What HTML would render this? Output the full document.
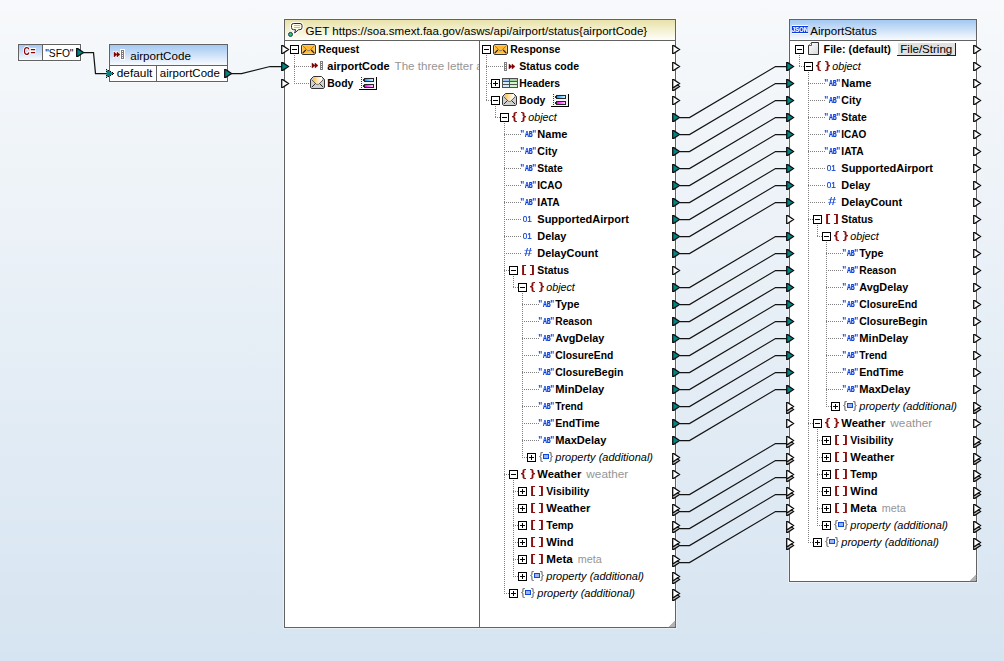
<!DOCTYPE html>
<html><head><meta charset="utf-8"><title>Mapping</title>
<style>
html,body{margin:0;padding:0;}
body{width:1004px;height:661px;overflow:hidden;background:#e6eef6;}
svg{display:block;font-family:"Liberation Sans",sans-serif;}
text{white-space:pre;}
</style></head><body>
<svg width="1004" height="661" viewBox="0 0 1004 661">
<defs>
<linearGradient id="gBg" x1="0" y1="0" x2="0" y2="1"><stop offset="0" stop-color="#f7f9fb"/><stop offset="1" stop-color="#d6e4f1"/></linearGradient>
<linearGradient id="gBlue" x1="0" y1="0" x2="0" y2="1"><stop offset="0" stop-color="#a3c8f2"/><stop offset="1" stop-color="#f8fbfe"/></linearGradient>
<linearGradient id="gYel" x1="0" y1="0" x2="0" y2="1"><stop offset="0" stop-color="#e8e2a8"/><stop offset="1" stop-color="#fffffa"/></linearGradient>
<linearGradient id="gOr" x1="0" y1="0" x2="0" y2="1"><stop offset="0" stop-color="#ffb429"/><stop offset="1" stop-color="#ffc044"/></linearGradient>
<linearGradient id="gOr2" x1="0" y1="0" x2="1" y2="0"><stop offset="0" stop-color="#ffbf45"/><stop offset=".55" stop-color="#ffe9c0"/><stop offset="1" stop-color="#ffffff"/></linearGradient>
<linearGradient id="gBarB" x1="0" y1="0" x2="1" y2="0"><stop offset="0" stop-color="#0a9cff"/><stop offset="1" stop-color="#d8f6ff"/></linearGradient>
<linearGradient id="gBarM" x1="0" y1="0" x2="1" y2="0"><stop offset="0" stop-color="#ff00ff"/><stop offset="1" stop-color="#ffc8ff"/></linearGradient>
<linearGradient id="gFile" x1="0" y1="0" x2="1" y2="1"><stop offset="0" stop-color="#ffffff"/><stop offset="1" stop-color="#d8d8dc"/></linearGradient>
<clipPath id="cReq"><rect x="285" y="41" width="194" height="586"/></clipPath>
</defs>
<rect width="1004" height="661" fill="url(#gBg)"/>

<g id="const">
<rect x="17.5" y="43.5" width="64" height="18" fill="none" stroke="#fff" stroke-opacity=".4"/>
<g shape-rendering="crispEdges"><rect x="18.5" y="44.5" width="62" height="16" fill="#fff" stroke="#626262"/><rect x="19" y="45" width="23" height="15" fill="url(#gBlue)"/><rect x="42" y="45" width="1" height="15" fill="#626262"/></g>
<text x="45.2" y="57" font-size="11.6" fill="#000" textLength="28.3" lengthAdjust="spacingAndGlyphs">&quot;SFO&quot;</text>
</g>
<g id="input">
<rect x="108.5" y="43.5" width="120" height="39" fill="none" stroke="#fff" stroke-opacity=".4"/>
<g shape-rendering="crispEdges"><rect x="109.5" y="44.5" width="118" height="37" fill="#fff" stroke="#626262"/><rect x="110" y="45" width="117" height="20" fill="url(#gBlue)"/><rect x="110" y="65" width="117" height="1" fill="#626262"/><rect x="156" y="66" width="1" height="15" fill="#626262"/></g>
<path d="M114,52 L117,54.5 L114,57 Z M117,52 L120,54.5 L117,57 Z" fill="#fff" stroke="#fff" stroke-width="2" stroke-linejoin="round"/><path d="M114,52 L117,54.5 L114,57 Z M117,52 L120,54.5 L117,57 Z" fill="#800000" stroke="#800000" stroke-width=".5" stroke-linejoin="round"/><g shape-rendering="crispEdges"><rect x="120" y="49" width="5" height="11" fill="#fff"/><rect x="121" y="50" width="3" height="9" fill="#7e7e7e"/><rect x="122" y="51" width="1" height="1" fill="#fff"/><rect x="122" y="53" width="1" height="1" fill="#fff"/><rect x="122" y="55" width="1" height="1" fill="#fff"/><rect x="122" y="57" width="1" height="1" fill="#fff"/></g>
<text x="130.2" y="60" font-size="11.6" fill="#000" textLength="60.7" lengthAdjust="spacingAndGlyphs">airportCode</text>
<text x="116.8" y="77" font-size="11.6" fill="#000" textLength="35.5" lengthAdjust="spacingAndGlyphs">default</text>
<text x="159.8" y="77" font-size="11.6" fill="#000" textLength="60" lengthAdjust="spacingAndGlyphs">airportCode</text>
</g>
<g id="rest">
<rect x="283.5" y="18.5" width="393" height="610" fill="none" stroke="#fff" stroke-opacity=".4"/>
<g shape-rendering="crispEdges"><rect x="284.5" y="19.5" width="391" height="608" fill="#fff" stroke="#626262"/><rect x="285" y="20" width="390" height="20" fill="url(#gYel)"/><rect x="285" y="40" width="390" height="1" fill="#626262"/><rect x="479" y="41" width="1" height="586" fill="#626262"/></g>
<g><path d="M293.5,23.5 H300 Q302,23.5 302,25.5 V27.5 Q302,29.7 300,29.7 H298.6 L294.6,33 L295.6,29.7 H293.5 Q291.5,29.7 291.5,27.5 V25.5 Q291.5,23.5 293.5,23.5 Z" fill="#fff" stroke="#fff" stroke-width="3" stroke-opacity=".85"/><path d="M293.5,23.5 H300 Q302,23.5 302,25.5 V27.5 Q302,29.7 300,29.7 H298.6 L294.6,33 L295.6,29.7 H293.5 Q291.5,29.7 291.5,27.5 V25.5 Q291.5,23.5 293.5,23.5 Z" fill="#fffde6" stroke="#2c2c2c" stroke-width="1"/><path d="M293.5,25.5 H300 M293.5,27.5 H300" stroke="#d6cc1c" stroke-width="1" shape-rendering="crispEdges"/><circle cx="290.5" cy="34.4" r="2.9" fill="#fff" fill-opacity=".8"/><circle cx="290.5" cy="34.4" r="2" fill="#25cf63" stroke="#17384f" stroke-width="1"/></g>
<text x="305.5" y="35" font-size="11.6" fill="#000" textLength="341.7" lengthAdjust="spacingAndGlyphs">GET https://soa.smext.faa.gov/asws/api/airport/status{airportCode}</text>
<g clip-path="url(#cReq)"><path d="M294,55h1v1h-1zM294,57h1v1h-1zM294,59h1v1h-1zM294,61h1v1h-1zM294,63h1v1h-1zM294,65h1v1h-1zM294,66h1v1h-1zM294,67h1v1h-1zM294,69h1v1h-1zM294,71h1v1h-1zM294,73h1v1h-1zM294,75h1v1h-1zM294,77h1v1h-1zM294,79h1v1h-1zM294,81h1v1h-1zM294,83h1v1h-1zM296,66h1v1h-1zM296,83h1v1h-1zM298,66h1v1h-1zM298,83h1v1h-1zM300,66h1v1h-1zM300,83h1v1h-1zM302,66h1v1h-1zM302,83h1v1h-1zM304,66h1v1h-1zM304,83h1v1h-1zM306,66h1v1h-1zM306,83h1v1h-1zM308,66h1v1h-1zM308,83h1v1h-1zM310,66h1v1h-1zM310,83h1v1h-1z" fill="#808080" shape-rendering="crispEdges"/>
<g shape-rendering="crispEdges"><rect x="290.5" y="45.5" width="8" height="8" fill="#fff" stroke="#000"/><rect x="292" y="49" width="5" height="1" fill="#000"/></g>
<g><path d="M302.5,44.5 H314.5 L315.5,45.5 V53.5 L314.5,54.5 H302.5 L301.5,53.5 V45.5 Z" fill="url(#gOr)" stroke="#2e343c"/><path d="M302.5,45.5 H314.5 V53.5 H302.5 Z" fill="none" stroke="#ffd27a" stroke-width="1" stroke-opacity=".8"/><path d="M302.5,45.5 L306.5,49.5 M314.5,45.5 L310.5,49.5" fill="none" stroke="#5a5a50" stroke-width="1" stroke-dasharray="1.1,.5"/><path d="M302.5,53.3 L305.8,50 M314.5,53.3 L311.2,50" fill="none" stroke="#1e1e1e" stroke-width="1.1"/><rect x="307" y="50" width="3" height="1" fill="#8a8a80"/></g>
<text x="318.3" y="53" font-weight="bold" font-size="11.6" fill="#000" textLength="41" lengthAdjust="spacingAndGlyphs">Request</text>
<path d="M312,63 L315,65.5 L312,68 Z M315,63 L318,65.5 L315,68 Z" fill="#800000" stroke="#800000" stroke-width=".5" stroke-linejoin="round"/><g shape-rendering="crispEdges"><rect x="320" y="61" width="3" height="9" fill="#7e7e7e"/><rect x="321" y="62" width="1" height="1" fill="#fff"/><rect x="321" y="64" width="1" height="1" fill="#fff"/><rect x="321" y="66" width="1" height="1" fill="#fff"/><rect x="321" y="68" width="1" height="1" fill="#fff"/></g>
<text x="327.3" y="70" font-weight="bold" font-size="11.6" fill="#000" textLength="62.3" lengthAdjust="spacingAndGlyphs">airportCode</text>
<text x="394.6" y="70" font-size="11.6" fill="#959595" textLength="142.896" lengthAdjust="spacingAndGlyphs">The three letter airport code</text>
<g><path d="M313.5,76.5 H321.5 L324.5,79.5 V87.5 L323.5,88.5 H311.5 L310.5,87.5 V79.5 Z" fill="#d0d0d0" stroke="#333"/><path d="M313,77 H322 V80 L319,83.6 H316 L313,80 Z" fill="url(#gOr2)"/><path d="M311.5,79.5 L316,84 M323.5,79.5 L319,84" fill="none" stroke="#555" stroke-width=".9"/><path d="M311.7,87.3 L315.3,83.7 M323.3,87.3 L319.7,83.7" fill="none" stroke="#2a2a2a" stroke-width="1"/><rect x="316" y="84" width="3" height="1" fill="#8c8c8c"/></g>
<text x="327.3" y="87" font-weight="bold" font-size="11.6" fill="#000" textLength="26" lengthAdjust="spacingAndGlyphs">Body</text>
<g shape-rendering="crispEdges"><rect x="362" y="77" width="14" height="12" fill="#f5f5f5"/><rect x="361" y="77" width="1" height="1" fill="#333"/><rect x="361" y="79" width="1" height="1" fill="#333"/><rect x="361" y="81" width="1" height="1" fill="#333"/><rect x="361" y="83" width="1" height="1" fill="#333"/><rect x="361" y="85" width="1" height="1" fill="#333"/><rect x="361" y="87" width="1" height="1" fill="#333"/><rect x="376" y="77" width="1" height="13" fill="#000"/><rect x="359" y="89" width="18" height="1" fill="#000"/><rect x="364" y="78" width="10" height="4" fill="#262626"/><rect x="363" y="79" width="1" height="2" fill="#262626"/><rect x="365" y="79" width="8" height="2" fill="url(#gBarB)"/><rect x="364" y="84" width="10" height="4" fill="#262626"/><rect x="363" y="85" width="1" height="2" fill="#262626"/><rect x="365" y="85" width="8" height="2" fill="url(#gBarM)"/></g></g>
<path d="M486,55h1v1h-1zM486,57h1v1h-1zM486,59h1v1h-1zM486,61h1v1h-1zM486,63h1v1h-1zM486,65h1v1h-1zM486,66h1v1h-1zM486,67h1v1h-1zM486,69h1v1h-1zM486,71h1v1h-1zM486,73h1v1h-1zM486,75h1v1h-1zM486,77h1v1h-1zM486,79h1v1h-1zM486,81h1v1h-1zM486,83h1v1h-1zM486,85h1v1h-1zM486,87h1v1h-1zM486,89h1v1h-1zM486,91h1v1h-1zM486,93h1v1h-1zM486,95h1v1h-1zM486,97h1v1h-1zM486,99h1v1h-1zM486,100h1v1h-1zM488,66h1v1h-1zM488,83h1v1h-1zM488,100h1v1h-1zM490,66h1v1h-1zM490,83h1v1h-1zM490,100h1v1h-1zM492,66h1v1h-1zM494,66h1v1h-1zM495,106h1v1h-1zM495,108h1v1h-1zM495,110h1v1h-1zM495,112h1v1h-1zM495,114h1v1h-1zM495,116h1v1h-1zM495,117h1v1h-1zM496,66h1v1h-1zM497,117h1v1h-1zM498,66h1v1h-1zM499,117h1v1h-1zM500,66h1v1h-1zM502,66h1v1h-1zM504,123h1v1h-1zM504,125h1v1h-1zM504,127h1v1h-1zM504,129h1v1h-1zM504,131h1v1h-1zM504,133h1v1h-1zM504,134h1v1h-1zM504,135h1v1h-1zM504,137h1v1h-1zM504,139h1v1h-1zM504,141h1v1h-1zM504,143h1v1h-1zM504,145h1v1h-1zM504,147h1v1h-1zM504,149h1v1h-1zM504,151h1v1h-1zM504,153h1v1h-1zM504,155h1v1h-1zM504,157h1v1h-1zM504,159h1v1h-1zM504,161h1v1h-1zM504,163h1v1h-1zM504,165h1v1h-1zM504,167h1v1h-1zM504,168h1v1h-1zM504,169h1v1h-1zM504,171h1v1h-1zM504,173h1v1h-1zM504,175h1v1h-1zM504,177h1v1h-1zM504,179h1v1h-1zM504,181h1v1h-1zM504,183h1v1h-1zM504,185h1v1h-1zM504,187h1v1h-1zM504,189h1v1h-1zM504,191h1v1h-1zM504,193h1v1h-1zM504,195h1v1h-1zM504,197h1v1h-1zM504,199h1v1h-1zM504,201h1v1h-1zM504,202h1v1h-1zM504,203h1v1h-1zM504,205h1v1h-1zM504,207h1v1h-1zM504,209h1v1h-1zM504,211h1v1h-1zM504,213h1v1h-1zM504,215h1v1h-1zM504,217h1v1h-1zM504,219h1v1h-1zM504,221h1v1h-1zM504,223h1v1h-1zM504,225h1v1h-1zM504,227h1v1h-1zM504,229h1v1h-1zM504,231h1v1h-1zM504,233h1v1h-1zM504,235h1v1h-1zM504,236h1v1h-1zM504,237h1v1h-1zM504,239h1v1h-1zM504,241h1v1h-1zM504,243h1v1h-1zM504,245h1v1h-1zM504,247h1v1h-1zM504,249h1v1h-1zM504,251h1v1h-1zM504,253h1v1h-1zM504,255h1v1h-1zM504,257h1v1h-1zM504,259h1v1h-1zM504,261h1v1h-1zM504,263h1v1h-1zM504,265h1v1h-1zM504,267h1v1h-1zM504,269h1v1h-1zM504,270h1v1h-1zM504,271h1v1h-1zM504,273h1v1h-1zM504,275h1v1h-1zM504,277h1v1h-1zM504,279h1v1h-1zM504,281h1v1h-1zM504,283h1v1h-1zM504,285h1v1h-1zM504,287h1v1h-1zM504,289h1v1h-1zM504,291h1v1h-1zM504,293h1v1h-1zM504,295h1v1h-1zM504,297h1v1h-1zM504,299h1v1h-1zM504,301h1v1h-1zM504,303h1v1h-1zM504,305h1v1h-1zM504,307h1v1h-1zM504,309h1v1h-1zM504,311h1v1h-1zM504,313h1v1h-1zM504,315h1v1h-1zM504,317h1v1h-1zM504,319h1v1h-1zM504,321h1v1h-1zM504,323h1v1h-1zM504,325h1v1h-1zM504,327h1v1h-1zM504,329h1v1h-1zM504,331h1v1h-1zM504,333h1v1h-1zM504,335h1v1h-1zM504,337h1v1h-1zM504,339h1v1h-1zM504,341h1v1h-1zM504,343h1v1h-1zM504,345h1v1h-1zM504,347h1v1h-1zM504,349h1v1h-1zM504,351h1v1h-1zM504,353h1v1h-1zM504,355h1v1h-1zM504,357h1v1h-1zM504,359h1v1h-1zM504,361h1v1h-1zM504,363h1v1h-1zM504,365h1v1h-1zM504,367h1v1h-1zM504,369h1v1h-1zM504,371h1v1h-1zM504,373h1v1h-1zM504,375h1v1h-1zM504,377h1v1h-1zM504,379h1v1h-1zM504,381h1v1h-1zM504,383h1v1h-1zM504,385h1v1h-1zM504,387h1v1h-1zM504,389h1v1h-1zM504,391h1v1h-1zM504,393h1v1h-1zM504,395h1v1h-1zM504,397h1v1h-1zM504,399h1v1h-1zM504,401h1v1h-1zM504,403h1v1h-1zM504,405h1v1h-1zM504,407h1v1h-1zM504,409h1v1h-1zM504,411h1v1h-1zM504,413h1v1h-1zM504,415h1v1h-1zM504,417h1v1h-1zM504,419h1v1h-1zM504,421h1v1h-1zM504,423h1v1h-1zM504,425h1v1h-1zM504,427h1v1h-1zM504,429h1v1h-1zM504,431h1v1h-1zM504,433h1v1h-1zM504,435h1v1h-1zM504,437h1v1h-1zM504,439h1v1h-1zM504,441h1v1h-1zM504,443h1v1h-1zM504,445h1v1h-1zM504,447h1v1h-1zM504,449h1v1h-1zM504,451h1v1h-1zM504,453h1v1h-1zM504,455h1v1h-1zM504,457h1v1h-1zM504,459h1v1h-1zM504,461h1v1h-1zM504,463h1v1h-1zM504,465h1v1h-1zM504,467h1v1h-1zM504,469h1v1h-1zM504,471h1v1h-1zM504,473h1v1h-1zM504,474h1v1h-1zM504,475h1v1h-1zM504,477h1v1h-1zM504,479h1v1h-1zM504,481h1v1h-1zM504,483h1v1h-1zM504,485h1v1h-1zM504,487h1v1h-1zM504,489h1v1h-1zM504,491h1v1h-1zM504,493h1v1h-1zM504,495h1v1h-1zM504,497h1v1h-1zM504,499h1v1h-1zM504,501h1v1h-1zM504,503h1v1h-1zM504,505h1v1h-1zM504,507h1v1h-1zM504,509h1v1h-1zM504,511h1v1h-1zM504,513h1v1h-1zM504,515h1v1h-1zM504,517h1v1h-1zM504,519h1v1h-1zM504,521h1v1h-1zM504,523h1v1h-1zM504,525h1v1h-1zM504,527h1v1h-1zM504,529h1v1h-1zM504,531h1v1h-1zM504,533h1v1h-1zM504,535h1v1h-1zM504,537h1v1h-1zM504,539h1v1h-1zM504,541h1v1h-1zM504,543h1v1h-1zM504,545h1v1h-1zM504,547h1v1h-1zM504,549h1v1h-1zM504,551h1v1h-1zM504,553h1v1h-1zM504,555h1v1h-1zM504,557h1v1h-1zM504,559h1v1h-1zM504,561h1v1h-1zM504,563h1v1h-1zM504,565h1v1h-1zM504,567h1v1h-1zM504,569h1v1h-1zM504,571h1v1h-1zM504,573h1v1h-1zM504,575h1v1h-1zM504,577h1v1h-1zM504,579h1v1h-1zM504,581h1v1h-1zM504,583h1v1h-1zM504,585h1v1h-1zM504,587h1v1h-1zM504,589h1v1h-1zM504,591h1v1h-1zM504,593h1v1h-1zM506,134h1v1h-1zM506,151h1v1h-1zM506,168h1v1h-1zM506,185h1v1h-1zM506,202h1v1h-1zM506,219h1v1h-1zM506,236h1v1h-1zM506,253h1v1h-1zM506,270h1v1h-1zM506,474h1v1h-1zM506,593h1v1h-1zM508,134h1v1h-1zM508,151h1v1h-1zM508,168h1v1h-1zM508,185h1v1h-1zM508,202h1v1h-1zM508,219h1v1h-1zM508,236h1v1h-1zM508,253h1v1h-1zM508,270h1v1h-1zM508,474h1v1h-1zM508,593h1v1h-1zM510,134h1v1h-1zM510,151h1v1h-1zM510,168h1v1h-1zM510,185h1v1h-1zM510,202h1v1h-1zM510,219h1v1h-1zM510,236h1v1h-1zM510,253h1v1h-1zM512,134h1v1h-1zM512,151h1v1h-1zM512,168h1v1h-1zM512,185h1v1h-1zM512,202h1v1h-1zM512,219h1v1h-1zM512,236h1v1h-1zM512,253h1v1h-1zM513,276h1v1h-1zM513,278h1v1h-1zM513,280h1v1h-1zM513,282h1v1h-1zM513,284h1v1h-1zM513,286h1v1h-1zM513,287h1v1h-1zM513,480h1v1h-1zM513,482h1v1h-1zM513,484h1v1h-1zM513,486h1v1h-1zM513,488h1v1h-1zM513,490h1v1h-1zM513,491h1v1h-1zM513,492h1v1h-1zM513,494h1v1h-1zM513,496h1v1h-1zM513,498h1v1h-1zM513,500h1v1h-1zM513,502h1v1h-1zM513,504h1v1h-1zM513,506h1v1h-1zM513,508h1v1h-1zM513,510h1v1h-1zM513,512h1v1h-1zM513,514h1v1h-1zM513,516h1v1h-1zM513,518h1v1h-1zM513,520h1v1h-1zM513,522h1v1h-1zM513,524h1v1h-1zM513,525h1v1h-1zM513,526h1v1h-1zM513,528h1v1h-1zM513,530h1v1h-1zM513,532h1v1h-1zM513,534h1v1h-1zM513,536h1v1h-1zM513,538h1v1h-1zM513,540h1v1h-1zM513,542h1v1h-1zM513,544h1v1h-1zM513,546h1v1h-1zM513,548h1v1h-1zM513,550h1v1h-1zM513,552h1v1h-1zM513,554h1v1h-1zM513,556h1v1h-1zM513,558h1v1h-1zM513,559h1v1h-1zM513,560h1v1h-1zM513,562h1v1h-1zM513,564h1v1h-1zM513,566h1v1h-1zM513,568h1v1h-1zM513,570h1v1h-1zM513,572h1v1h-1zM513,574h1v1h-1zM513,576h1v1h-1zM514,134h1v1h-1zM514,151h1v1h-1zM514,168h1v1h-1zM514,185h1v1h-1zM514,202h1v1h-1zM514,219h1v1h-1zM514,236h1v1h-1zM514,253h1v1h-1zM515,287h1v1h-1zM515,491h1v1h-1zM515,508h1v1h-1zM515,525h1v1h-1zM515,542h1v1h-1zM515,559h1v1h-1zM515,576h1v1h-1zM516,134h1v1h-1zM516,151h1v1h-1zM516,168h1v1h-1zM516,185h1v1h-1zM516,202h1v1h-1zM516,219h1v1h-1zM516,236h1v1h-1zM516,253h1v1h-1zM517,287h1v1h-1zM517,491h1v1h-1zM517,508h1v1h-1zM517,525h1v1h-1zM517,542h1v1h-1zM517,559h1v1h-1zM517,576h1v1h-1zM518,134h1v1h-1zM518,151h1v1h-1zM518,168h1v1h-1zM518,185h1v1h-1zM518,202h1v1h-1zM518,219h1v1h-1zM518,236h1v1h-1zM518,253h1v1h-1zM520,134h1v1h-1zM520,151h1v1h-1zM520,168h1v1h-1zM520,185h1v1h-1zM520,202h1v1h-1zM520,219h1v1h-1zM520,236h1v1h-1zM520,253h1v1h-1zM522,293h1v1h-1zM522,295h1v1h-1zM522,297h1v1h-1zM522,299h1v1h-1zM522,301h1v1h-1zM522,303h1v1h-1zM522,304h1v1h-1zM522,305h1v1h-1zM522,307h1v1h-1zM522,309h1v1h-1zM522,311h1v1h-1zM522,313h1v1h-1zM522,315h1v1h-1zM522,317h1v1h-1zM522,319h1v1h-1zM522,321h1v1h-1zM522,323h1v1h-1zM522,325h1v1h-1zM522,327h1v1h-1zM522,329h1v1h-1zM522,331h1v1h-1zM522,333h1v1h-1zM522,335h1v1h-1zM522,337h1v1h-1zM522,338h1v1h-1zM522,339h1v1h-1zM522,341h1v1h-1zM522,343h1v1h-1zM522,345h1v1h-1zM522,347h1v1h-1zM522,349h1v1h-1zM522,351h1v1h-1zM522,353h1v1h-1zM522,355h1v1h-1zM522,357h1v1h-1zM522,359h1v1h-1zM522,361h1v1h-1zM522,363h1v1h-1zM522,365h1v1h-1zM522,367h1v1h-1zM522,369h1v1h-1zM522,371h1v1h-1zM522,372h1v1h-1zM522,373h1v1h-1zM522,375h1v1h-1zM522,377h1v1h-1zM522,379h1v1h-1zM522,381h1v1h-1zM522,383h1v1h-1zM522,385h1v1h-1zM522,387h1v1h-1zM522,389h1v1h-1zM522,391h1v1h-1zM522,393h1v1h-1zM522,395h1v1h-1zM522,397h1v1h-1zM522,399h1v1h-1zM522,401h1v1h-1zM522,403h1v1h-1zM522,405h1v1h-1zM522,406h1v1h-1zM522,407h1v1h-1zM522,409h1v1h-1zM522,411h1v1h-1zM522,413h1v1h-1zM522,415h1v1h-1zM522,417h1v1h-1zM522,419h1v1h-1zM522,421h1v1h-1zM522,423h1v1h-1zM522,425h1v1h-1zM522,427h1v1h-1zM522,429h1v1h-1zM522,431h1v1h-1zM522,433h1v1h-1zM522,435h1v1h-1zM522,437h1v1h-1zM522,439h1v1h-1zM522,440h1v1h-1zM522,441h1v1h-1zM522,443h1v1h-1zM522,445h1v1h-1zM522,447h1v1h-1zM522,449h1v1h-1zM522,451h1v1h-1zM522,453h1v1h-1zM522,455h1v1h-1zM522,457h1v1h-1zM524,304h1v1h-1zM524,321h1v1h-1zM524,338h1v1h-1zM524,355h1v1h-1zM524,372h1v1h-1zM524,389h1v1h-1zM524,406h1v1h-1zM524,423h1v1h-1zM524,440h1v1h-1zM524,457h1v1h-1zM526,304h1v1h-1zM526,321h1v1h-1zM526,338h1v1h-1zM526,355h1v1h-1zM526,372h1v1h-1zM526,389h1v1h-1zM526,406h1v1h-1zM526,423h1v1h-1zM526,440h1v1h-1zM526,457h1v1h-1zM528,304h1v1h-1zM528,321h1v1h-1zM528,338h1v1h-1zM528,355h1v1h-1zM528,372h1v1h-1zM528,389h1v1h-1zM528,406h1v1h-1zM528,423h1v1h-1zM528,440h1v1h-1zM530,304h1v1h-1zM530,321h1v1h-1zM530,338h1v1h-1zM530,355h1v1h-1zM530,372h1v1h-1zM530,389h1v1h-1zM530,406h1v1h-1zM530,423h1v1h-1zM530,440h1v1h-1zM532,304h1v1h-1zM532,321h1v1h-1zM532,338h1v1h-1zM532,355h1v1h-1zM532,372h1v1h-1zM532,389h1v1h-1zM532,406h1v1h-1zM532,423h1v1h-1zM532,440h1v1h-1zM534,304h1v1h-1zM534,321h1v1h-1zM534,338h1v1h-1zM534,355h1v1h-1zM534,372h1v1h-1zM534,389h1v1h-1zM534,406h1v1h-1zM534,423h1v1h-1zM534,440h1v1h-1zM536,304h1v1h-1zM536,321h1v1h-1zM536,338h1v1h-1zM536,355h1v1h-1zM536,372h1v1h-1zM536,389h1v1h-1zM536,406h1v1h-1zM536,423h1v1h-1zM536,440h1v1h-1zM538,304h1v1h-1zM538,321h1v1h-1zM538,338h1v1h-1zM538,355h1v1h-1zM538,372h1v1h-1zM538,389h1v1h-1zM538,406h1v1h-1zM538,423h1v1h-1zM538,440h1v1h-1z" fill="#808080" shape-rendering="crispEdges"/>
<g shape-rendering="crispEdges"><rect x="482.5" y="45.5" width="8" height="8" fill="#fff" stroke="#000"/><rect x="484" y="49" width="5" height="1" fill="#000"/></g>
<g><path d="M494.5,44.5 H506.5 L507.5,45.5 V53.5 L506.5,54.5 H494.5 L493.5,53.5 V45.5 Z" fill="url(#gOr)" stroke="#2e343c"/><path d="M494.5,45.5 H506.5 V53.5 H494.5 Z" fill="none" stroke="#ffd27a" stroke-width="1" stroke-opacity=".8"/><path d="M494.5,45.5 L498.5,49.5 M506.5,45.5 L502.5,49.5" fill="none" stroke="#5a5a50" stroke-width="1" stroke-dasharray="1.1,.5"/><path d="M494.5,53.3 L497.8,50 M506.5,53.3 L503.2,50" fill="none" stroke="#1e1e1e" stroke-width="1.1"/><rect x="499" y="50" width="3" height="1" fill="#8a8a80"/></g>
<text x="510.3" y="53" font-weight="bold" font-size="11.6" fill="#000" textLength="50" lengthAdjust="spacingAndGlyphs">Response</text>
<g shape-rendering="crispEdges"><rect x="504" y="62" width="3" height="9" fill="#7e7e7e"/><rect x="505" y="63" width="1" height="1" fill="#fff"/><rect x="505" y="65" width="1" height="1" fill="#fff"/><rect x="505" y="67" width="1" height="1" fill="#fff"/><rect x="505" y="69" width="1" height="1" fill="#fff"/></g><path d="M509,64 L512,66.5 L509,69 Z M512,64 L515,66.5 L512,69 Z" fill="#800000" stroke="#800000" stroke-width=".5" stroke-linejoin="round"/>
<text x="519.3" y="70" font-weight="bold" font-size="11.6" fill="#000" textLength="59.7" lengthAdjust="spacingAndGlyphs">Status code</text>
<g shape-rendering="crispEdges"><rect x="491.5" y="79.5" width="8" height="8" fill="#fff" stroke="#000"/><rect x="493" y="83" width="5" height="1" fill="#000"/><rect x="495" y="81" width="1" height="5" fill="#000"/></g>
<g shape-rendering="crispEdges"><rect x="502" y="78" width="16" height="10" fill="#505050"/><rect x="503" y="79" width="6" height="2" fill="#9fc6f6"/><rect x="503" y="82" width="6" height="2" fill="#d4ecff"/><rect x="503" y="85" width="6" height="2" fill="#d4ecff"/><rect x="510" y="79" width="7" height="2" fill="#9fd6a0"/><rect x="510" y="82" width="7" height="2" fill="#d2f6c8"/><rect x="510" y="85" width="7" height="2" fill="#d2f6c8"/></g>
<text x="519.3" y="87" font-weight="bold" font-size="11.6" fill="#000" textLength="40.8" lengthAdjust="spacingAndGlyphs">Headers</text>
<g shape-rendering="crispEdges"><rect x="491.5" y="96.5" width="8" height="8" fill="#fff" stroke="#000"/><rect x="493" y="100" width="5" height="1" fill="#000"/></g>
<g><path d="M505.5,93.5 H513.5 L516.5,96.5 V104.5 L515.5,105.5 H503.5 L502.5,104.5 V96.5 Z" fill="#d0d0d0" stroke="#333"/><path d="M505,94 H514 V97 L511,100.6 H508 L505,97 Z" fill="url(#gOr2)"/><path d="M503.5,96.5 L508,101 M515.5,96.5 L511,101" fill="none" stroke="#555" stroke-width=".9"/><path d="M503.7,104.3 L507.3,100.7 M515.3,104.3 L511.7,100.7" fill="none" stroke="#2a2a2a" stroke-width="1"/><rect x="508" y="101" width="3" height="1" fill="#8c8c8c"/></g>
<text x="519.3" y="104" font-weight="bold" font-size="11.6" fill="#000" textLength="26" lengthAdjust="spacingAndGlyphs">Body</text>
<g shape-rendering="crispEdges"><rect x="554" y="94" width="14" height="12" fill="#f5f5f5"/><rect x="553" y="94" width="1" height="1" fill="#333"/><rect x="553" y="96" width="1" height="1" fill="#333"/><rect x="553" y="98" width="1" height="1" fill="#333"/><rect x="553" y="100" width="1" height="1" fill="#333"/><rect x="553" y="102" width="1" height="1" fill="#333"/><rect x="553" y="104" width="1" height="1" fill="#333"/><rect x="568" y="94" width="1" height="13" fill="#000"/><rect x="551" y="106" width="18" height="1" fill="#000"/><rect x="556" y="95" width="10" height="4" fill="#262626"/><rect x="555" y="96" width="1" height="2" fill="#262626"/><rect x="557" y="96" width="8" height="2" fill="url(#gBarB)"/><rect x="556" y="101" width="10" height="4" fill="#262626"/><rect x="555" y="102" width="1" height="2" fill="#262626"/><rect x="557" y="102" width="8" height="2" fill="url(#gBarM)"/></g>
<g shape-rendering="crispEdges"><rect x="500.5" y="113.5" width="8" height="8" fill="#fff" stroke="#000"/><rect x="502" y="117" width="5" height="1" fill="#000"/></g>

<text x="528.3" y="121" font-style="italic" font-size="11.6" fill="#000" textLength="28.5" lengthAdjust="spacingAndGlyphs">object</text>

<text x="537.3" y="138" font-weight="bold" font-size="11.6" fill="#000" textLength="30" lengthAdjust="spacingAndGlyphs">Name</text>

<text x="537.3" y="155" font-weight="bold" font-size="11.6" fill="#000" textLength="20" lengthAdjust="spacingAndGlyphs">City</text>

<text x="537.3" y="172" font-weight="bold" font-size="11.6" fill="#000" textLength="25.4" lengthAdjust="spacingAndGlyphs">State</text>

<text x="537.3" y="189" font-weight="bold" font-size="11.6" fill="#000" textLength="25" lengthAdjust="spacingAndGlyphs">ICAO</text>

<text x="537.3" y="206" font-weight="bold" font-size="11.6" fill="#000" textLength="22.4" lengthAdjust="spacingAndGlyphs">IATA</text>

<text x="537.3" y="223" font-weight="bold" font-size="11.6" fill="#000" textLength="91.7" lengthAdjust="spacingAndGlyphs">SupportedAirport</text>

<text x="537.3" y="240" font-weight="bold" font-size="11.6" fill="#000" textLength="29" lengthAdjust="spacingAndGlyphs">Delay</text>

<text x="537.3" y="257" font-weight="bold" font-size="11.6" fill="#000" textLength="60.8" lengthAdjust="spacingAndGlyphs">DelayCount</text>
<g shape-rendering="crispEdges"><rect x="509.5" y="266.5" width="8" height="8" fill="#fff" stroke="#000"/><rect x="511" y="270" width="5" height="1" fill="#000"/></g>

<text x="537.3" y="274" font-weight="bold" font-size="11.6" fill="#000" textLength="31.8" lengthAdjust="spacingAndGlyphs">Status</text>
<g shape-rendering="crispEdges"><rect x="518.5" y="283.5" width="8" height="8" fill="#fff" stroke="#000"/><rect x="520" y="287" width="5" height="1" fill="#000"/></g>

<text x="546.3" y="291" font-style="italic" font-size="11.6" fill="#000" textLength="28.5" lengthAdjust="spacingAndGlyphs">object</text>

<text x="555.3" y="308" font-weight="bold" font-size="11.6" fill="#000" textLength="24.2" lengthAdjust="spacingAndGlyphs">Type</text>

<text x="555.3" y="325" font-weight="bold" font-size="11.6" fill="#000" textLength="36.9" lengthAdjust="spacingAndGlyphs">Reason</text>

<text x="555.3" y="342" font-weight="bold" font-size="11.6" fill="#000" textLength="49" lengthAdjust="spacingAndGlyphs">AvgDelay</text>

<text x="555.3" y="359" font-weight="bold" font-size="11.6" fill="#000" textLength="58.1" lengthAdjust="spacingAndGlyphs">ClosureEnd</text>

<text x="555.3" y="376" font-weight="bold" font-size="11.6" fill="#000" textLength="68.1" lengthAdjust="spacingAndGlyphs">ClosureBegin</text>

<text x="555.3" y="393" font-weight="bold" font-size="11.6" fill="#000" textLength="49" lengthAdjust="spacingAndGlyphs">MinDelay</text>

<text x="555.3" y="410" font-weight="bold" font-size="11.6" fill="#000" textLength="27.8" lengthAdjust="spacingAndGlyphs">Trend</text>

<text x="555.3" y="427" font-weight="bold" font-size="11.6" fill="#000" textLength="44.4" lengthAdjust="spacingAndGlyphs">EndTime</text>

<text x="555.3" y="444" font-weight="bold" font-size="11.6" fill="#000" textLength="51.1" lengthAdjust="spacingAndGlyphs">MaxDelay</text>
<g shape-rendering="crispEdges"><rect x="527.5" y="453.5" width="8" height="8" fill="#fff" stroke="#000"/><rect x="529" y="457" width="5" height="1" fill="#000"/><rect x="531" y="455" width="1" height="5" fill="#000"/></g>
<rect x="543.5" y="454.5" width="5" height="4" fill="#9db6f2" stroke="#0a4ae0" shape-rendering="crispEdges"/>
<text x="555.3" y="461" font-style="italic" font-size="11.6" fill="#000" textLength="97.7" lengthAdjust="spacingAndGlyphs">property (additional)</text>
<g shape-rendering="crispEdges"><rect x="509.5" y="470.5" width="8" height="8" fill="#fff" stroke="#000"/><rect x="511" y="474" width="5" height="1" fill="#000"/></g>

<text x="537.3" y="478" font-weight="bold" font-size="11.6" fill="#000" textLength="44" lengthAdjust="spacingAndGlyphs">Weather</text>
<text x="586.3" y="478" font-size="11.6" fill="#959595" textLength="42" lengthAdjust="spacingAndGlyphs">weather</text>
<g shape-rendering="crispEdges"><rect x="518.5" y="487.5" width="8" height="8" fill="#fff" stroke="#000"/><rect x="520" y="491" width="5" height="1" fill="#000"/><rect x="522" y="489" width="1" height="5" fill="#000"/></g>

<text x="546.3" y="495" font-weight="bold" font-size="11.6" fill="#000" textLength="43" lengthAdjust="spacingAndGlyphs">Visibility</text>
<g shape-rendering="crispEdges"><rect x="518.5" y="504.5" width="8" height="8" fill="#fff" stroke="#000"/><rect x="520" y="508" width="5" height="1" fill="#000"/><rect x="522" y="506" width="1" height="5" fill="#000"/></g>

<text x="546.3" y="512" font-weight="bold" font-size="11.6" fill="#000" textLength="44" lengthAdjust="spacingAndGlyphs">Weather</text>
<g shape-rendering="crispEdges"><rect x="518.5" y="521.5" width="8" height="8" fill="#fff" stroke="#000"/><rect x="520" y="525" width="5" height="1" fill="#000"/><rect x="522" y="523" width="1" height="5" fill="#000"/></g>

<text x="546.3" y="529" font-weight="bold" font-size="11.6" fill="#000" textLength="27.2" lengthAdjust="spacingAndGlyphs">Temp</text>
<g shape-rendering="crispEdges"><rect x="518.5" y="538.5" width="8" height="8" fill="#fff" stroke="#000"/><rect x="520" y="542" width="5" height="1" fill="#000"/><rect x="522" y="540" width="1" height="5" fill="#000"/></g>

<text x="546.3" y="546" font-weight="bold" font-size="11.6" fill="#000" textLength="27.2" lengthAdjust="spacingAndGlyphs">Wind</text>
<g shape-rendering="crispEdges"><rect x="518.5" y="555.5" width="8" height="8" fill="#fff" stroke="#000"/><rect x="520" y="559" width="5" height="1" fill="#000"/><rect x="522" y="557" width="1" height="5" fill="#000"/></g>

<text x="546.3" y="563" font-weight="bold" font-size="11.6" fill="#000" textLength="26.5" lengthAdjust="spacingAndGlyphs">Meta</text>
<text x="577.8" y="563" font-size="11.6" fill="#959595" textLength="24" lengthAdjust="spacingAndGlyphs">meta</text>
<g shape-rendering="crispEdges"><rect x="518.5" y="572.5" width="8" height="8" fill="#fff" stroke="#000"/><rect x="520" y="576" width="5" height="1" fill="#000"/><rect x="522" y="574" width="1" height="5" fill="#000"/></g>
<rect x="534.5" y="573.5" width="5" height="4" fill="#9db6f2" stroke="#0a4ae0" shape-rendering="crispEdges"/>
<text x="546.3" y="580" font-style="italic" font-size="11.6" fill="#000" textLength="97.7" lengthAdjust="spacingAndGlyphs">property (additional)</text>
<g shape-rendering="crispEdges"><rect x="509.5" y="589.5" width="8" height="8" fill="#fff" stroke="#000"/><rect x="511" y="593" width="5" height="1" fill="#000"/><rect x="513" y="591" width="1" height="5" fill="#000"/></g>
<rect x="525.5" y="590.5" width="5" height="4" fill="#9db6f2" stroke="#0a4ae0" shape-rendering="crispEdges"/>
<text x="537.3" y="597" font-style="italic" font-size="11.6" fill="#000" textLength="97.7" lengthAdjust="spacingAndGlyphs">property (additional)</text>
<path d="M675,620.5 L675,627 L668.5,627 Z" fill="#d8d8d8"/><path d="M669,627.5 L675.5,621 M671,627.5 L675.5,623 M673,627.5 L675.5,625" stroke="#8e8e8e" stroke-width="1"/>
</g>
<g id="json">
<rect x="788.5" y="18.5" width="189" height="564" fill="none" stroke="#fff" stroke-opacity=".4"/>
<g shape-rendering="crispEdges"><rect x="789.5" y="19.5" width="187" height="562" fill="#fff" stroke="#626262"/><rect x="790" y="20" width="186" height="20" fill="url(#gBlue)"/><rect x="790" y="40" width="186" height="1" fill="#626262"/></g>
<g shape-rendering="crispEdges"><rect x="792" y="25" width="16" height="9" fill="#fff"/><rect x="792" y="26" width="16" height="7" fill="#0a3ae0"/></g>
<text x="810.2" y="35" font-size="11.6" fill="#000" textLength="66.7" lengthAdjust="spacingAndGlyphs">AirportStatus</text>
<path d="M799,55h1v1h-1zM799,57h1v1h-1zM799,59h1v1h-1zM799,61h1v1h-1zM799,63h1v1h-1zM799,65h1v1h-1zM799,66h1v1h-1zM801,66h1v1h-1zM803,66h1v1h-1zM808,72h1v1h-1zM808,74h1v1h-1zM808,76h1v1h-1zM808,78h1v1h-1zM808,80h1v1h-1zM808,82h1v1h-1zM808,83h1v1h-1zM808,84h1v1h-1zM808,86h1v1h-1zM808,88h1v1h-1zM808,90h1v1h-1zM808,92h1v1h-1zM808,94h1v1h-1zM808,96h1v1h-1zM808,98h1v1h-1zM808,100h1v1h-1zM808,102h1v1h-1zM808,104h1v1h-1zM808,106h1v1h-1zM808,108h1v1h-1zM808,110h1v1h-1zM808,112h1v1h-1zM808,114h1v1h-1zM808,116h1v1h-1zM808,117h1v1h-1zM808,118h1v1h-1zM808,120h1v1h-1zM808,122h1v1h-1zM808,124h1v1h-1zM808,126h1v1h-1zM808,128h1v1h-1zM808,130h1v1h-1zM808,132h1v1h-1zM808,134h1v1h-1zM808,136h1v1h-1zM808,138h1v1h-1zM808,140h1v1h-1zM808,142h1v1h-1zM808,144h1v1h-1zM808,146h1v1h-1zM808,148h1v1h-1zM808,150h1v1h-1zM808,151h1v1h-1zM808,152h1v1h-1zM808,154h1v1h-1zM808,156h1v1h-1zM808,158h1v1h-1zM808,160h1v1h-1zM808,162h1v1h-1zM808,164h1v1h-1zM808,166h1v1h-1zM808,168h1v1h-1zM808,170h1v1h-1zM808,172h1v1h-1zM808,174h1v1h-1zM808,176h1v1h-1zM808,178h1v1h-1zM808,180h1v1h-1zM808,182h1v1h-1zM808,184h1v1h-1zM808,185h1v1h-1zM808,186h1v1h-1zM808,188h1v1h-1zM808,190h1v1h-1zM808,192h1v1h-1zM808,194h1v1h-1zM808,196h1v1h-1zM808,198h1v1h-1zM808,200h1v1h-1zM808,202h1v1h-1zM808,204h1v1h-1zM808,206h1v1h-1zM808,208h1v1h-1zM808,210h1v1h-1zM808,212h1v1h-1zM808,214h1v1h-1zM808,216h1v1h-1zM808,218h1v1h-1zM808,219h1v1h-1zM808,220h1v1h-1zM808,222h1v1h-1zM808,224h1v1h-1zM808,226h1v1h-1zM808,228h1v1h-1zM808,230h1v1h-1zM808,232h1v1h-1zM808,234h1v1h-1zM808,236h1v1h-1zM808,238h1v1h-1zM808,240h1v1h-1zM808,242h1v1h-1zM808,244h1v1h-1zM808,246h1v1h-1zM808,248h1v1h-1zM808,250h1v1h-1zM808,252h1v1h-1zM808,254h1v1h-1zM808,256h1v1h-1zM808,258h1v1h-1zM808,260h1v1h-1zM808,262h1v1h-1zM808,264h1v1h-1zM808,266h1v1h-1zM808,268h1v1h-1zM808,270h1v1h-1zM808,272h1v1h-1zM808,274h1v1h-1zM808,276h1v1h-1zM808,278h1v1h-1zM808,280h1v1h-1zM808,282h1v1h-1zM808,284h1v1h-1zM808,286h1v1h-1zM808,288h1v1h-1zM808,290h1v1h-1zM808,292h1v1h-1zM808,294h1v1h-1zM808,296h1v1h-1zM808,298h1v1h-1zM808,300h1v1h-1zM808,302h1v1h-1zM808,304h1v1h-1zM808,306h1v1h-1zM808,308h1v1h-1zM808,310h1v1h-1zM808,312h1v1h-1zM808,314h1v1h-1zM808,316h1v1h-1zM808,318h1v1h-1zM808,320h1v1h-1zM808,322h1v1h-1zM808,324h1v1h-1zM808,326h1v1h-1zM808,328h1v1h-1zM808,330h1v1h-1zM808,332h1v1h-1zM808,334h1v1h-1zM808,336h1v1h-1zM808,338h1v1h-1zM808,340h1v1h-1zM808,342h1v1h-1zM808,344h1v1h-1zM808,346h1v1h-1zM808,348h1v1h-1zM808,350h1v1h-1zM808,352h1v1h-1zM808,354h1v1h-1zM808,356h1v1h-1zM808,358h1v1h-1zM808,360h1v1h-1zM808,362h1v1h-1zM808,364h1v1h-1zM808,366h1v1h-1zM808,368h1v1h-1zM808,370h1v1h-1zM808,372h1v1h-1zM808,374h1v1h-1zM808,376h1v1h-1zM808,378h1v1h-1zM808,380h1v1h-1zM808,382h1v1h-1zM808,384h1v1h-1zM808,386h1v1h-1zM808,388h1v1h-1zM808,390h1v1h-1zM808,392h1v1h-1zM808,394h1v1h-1zM808,396h1v1h-1zM808,398h1v1h-1zM808,400h1v1h-1zM808,402h1v1h-1zM808,404h1v1h-1zM808,406h1v1h-1zM808,408h1v1h-1zM808,410h1v1h-1zM808,412h1v1h-1zM808,414h1v1h-1zM808,416h1v1h-1zM808,418h1v1h-1zM808,420h1v1h-1zM808,422h1v1h-1zM808,423h1v1h-1zM808,424h1v1h-1zM808,426h1v1h-1zM808,428h1v1h-1zM808,430h1v1h-1zM808,432h1v1h-1zM808,434h1v1h-1zM808,436h1v1h-1zM808,438h1v1h-1zM808,440h1v1h-1zM808,442h1v1h-1zM808,444h1v1h-1zM808,446h1v1h-1zM808,448h1v1h-1zM808,450h1v1h-1zM808,452h1v1h-1zM808,454h1v1h-1zM808,456h1v1h-1zM808,458h1v1h-1zM808,460h1v1h-1zM808,462h1v1h-1zM808,464h1v1h-1zM808,466h1v1h-1zM808,468h1v1h-1zM808,470h1v1h-1zM808,472h1v1h-1zM808,474h1v1h-1zM808,476h1v1h-1zM808,478h1v1h-1zM808,480h1v1h-1zM808,482h1v1h-1zM808,484h1v1h-1zM808,486h1v1h-1zM808,488h1v1h-1zM808,490h1v1h-1zM808,492h1v1h-1zM808,494h1v1h-1zM808,496h1v1h-1zM808,498h1v1h-1zM808,500h1v1h-1zM808,502h1v1h-1zM808,504h1v1h-1zM808,506h1v1h-1zM808,508h1v1h-1zM808,510h1v1h-1zM808,512h1v1h-1zM808,514h1v1h-1zM808,516h1v1h-1zM808,518h1v1h-1zM808,520h1v1h-1zM808,522h1v1h-1zM808,524h1v1h-1zM808,526h1v1h-1zM808,528h1v1h-1zM808,530h1v1h-1zM808,532h1v1h-1zM808,534h1v1h-1zM808,536h1v1h-1zM808,538h1v1h-1zM808,540h1v1h-1zM808,542h1v1h-1zM810,83h1v1h-1zM810,100h1v1h-1zM810,117h1v1h-1zM810,134h1v1h-1zM810,151h1v1h-1zM810,168h1v1h-1zM810,185h1v1h-1zM810,202h1v1h-1zM810,219h1v1h-1zM810,423h1v1h-1zM810,542h1v1h-1zM812,83h1v1h-1zM812,100h1v1h-1zM812,117h1v1h-1zM812,134h1v1h-1zM812,151h1v1h-1zM812,168h1v1h-1zM812,185h1v1h-1zM812,202h1v1h-1zM812,219h1v1h-1zM812,423h1v1h-1zM812,542h1v1h-1zM814,83h1v1h-1zM814,100h1v1h-1zM814,117h1v1h-1zM814,134h1v1h-1zM814,151h1v1h-1zM814,168h1v1h-1zM814,185h1v1h-1zM814,202h1v1h-1zM816,83h1v1h-1zM816,100h1v1h-1zM816,117h1v1h-1zM816,134h1v1h-1zM816,151h1v1h-1zM816,168h1v1h-1zM816,185h1v1h-1zM816,202h1v1h-1zM817,225h1v1h-1zM817,227h1v1h-1zM817,229h1v1h-1zM817,231h1v1h-1zM817,233h1v1h-1zM817,235h1v1h-1zM817,236h1v1h-1zM817,429h1v1h-1zM817,431h1v1h-1zM817,433h1v1h-1zM817,435h1v1h-1zM817,437h1v1h-1zM817,439h1v1h-1zM817,440h1v1h-1zM817,441h1v1h-1zM817,443h1v1h-1zM817,445h1v1h-1zM817,447h1v1h-1zM817,449h1v1h-1zM817,451h1v1h-1zM817,453h1v1h-1zM817,455h1v1h-1zM817,457h1v1h-1zM817,459h1v1h-1zM817,461h1v1h-1zM817,463h1v1h-1zM817,465h1v1h-1zM817,467h1v1h-1zM817,469h1v1h-1zM817,471h1v1h-1zM817,473h1v1h-1zM817,474h1v1h-1zM817,475h1v1h-1zM817,477h1v1h-1zM817,479h1v1h-1zM817,481h1v1h-1zM817,483h1v1h-1zM817,485h1v1h-1zM817,487h1v1h-1zM817,489h1v1h-1zM817,491h1v1h-1zM817,493h1v1h-1zM817,495h1v1h-1zM817,497h1v1h-1zM817,499h1v1h-1zM817,501h1v1h-1zM817,503h1v1h-1zM817,505h1v1h-1zM817,507h1v1h-1zM817,508h1v1h-1zM817,509h1v1h-1zM817,511h1v1h-1zM817,513h1v1h-1zM817,515h1v1h-1zM817,517h1v1h-1zM817,519h1v1h-1zM817,521h1v1h-1zM817,523h1v1h-1zM817,525h1v1h-1zM818,83h1v1h-1zM818,100h1v1h-1zM818,117h1v1h-1zM818,134h1v1h-1zM818,151h1v1h-1zM818,168h1v1h-1zM818,185h1v1h-1zM818,202h1v1h-1zM819,236h1v1h-1zM819,440h1v1h-1zM819,457h1v1h-1zM819,474h1v1h-1zM819,491h1v1h-1zM819,508h1v1h-1zM819,525h1v1h-1zM820,83h1v1h-1zM820,100h1v1h-1zM820,117h1v1h-1zM820,134h1v1h-1zM820,151h1v1h-1zM820,168h1v1h-1zM820,185h1v1h-1zM820,202h1v1h-1zM821,236h1v1h-1zM821,440h1v1h-1zM821,457h1v1h-1zM821,474h1v1h-1zM821,491h1v1h-1zM821,508h1v1h-1zM821,525h1v1h-1zM822,83h1v1h-1zM822,100h1v1h-1zM822,117h1v1h-1zM822,134h1v1h-1zM822,151h1v1h-1zM822,168h1v1h-1zM822,185h1v1h-1zM822,202h1v1h-1zM824,83h1v1h-1zM824,100h1v1h-1zM824,117h1v1h-1zM824,134h1v1h-1zM824,151h1v1h-1zM824,168h1v1h-1zM824,185h1v1h-1zM824,202h1v1h-1zM826,242h1v1h-1zM826,244h1v1h-1zM826,246h1v1h-1zM826,248h1v1h-1zM826,250h1v1h-1zM826,252h1v1h-1zM826,253h1v1h-1zM826,254h1v1h-1zM826,256h1v1h-1zM826,258h1v1h-1zM826,260h1v1h-1zM826,262h1v1h-1zM826,264h1v1h-1zM826,266h1v1h-1zM826,268h1v1h-1zM826,270h1v1h-1zM826,272h1v1h-1zM826,274h1v1h-1zM826,276h1v1h-1zM826,278h1v1h-1zM826,280h1v1h-1zM826,282h1v1h-1zM826,284h1v1h-1zM826,286h1v1h-1zM826,287h1v1h-1zM826,288h1v1h-1zM826,290h1v1h-1zM826,292h1v1h-1zM826,294h1v1h-1zM826,296h1v1h-1zM826,298h1v1h-1zM826,300h1v1h-1zM826,302h1v1h-1zM826,304h1v1h-1zM826,306h1v1h-1zM826,308h1v1h-1zM826,310h1v1h-1zM826,312h1v1h-1zM826,314h1v1h-1zM826,316h1v1h-1zM826,318h1v1h-1zM826,320h1v1h-1zM826,321h1v1h-1zM826,322h1v1h-1zM826,324h1v1h-1zM826,326h1v1h-1zM826,328h1v1h-1zM826,330h1v1h-1zM826,332h1v1h-1zM826,334h1v1h-1zM826,336h1v1h-1zM826,338h1v1h-1zM826,340h1v1h-1zM826,342h1v1h-1zM826,344h1v1h-1zM826,346h1v1h-1zM826,348h1v1h-1zM826,350h1v1h-1zM826,352h1v1h-1zM826,354h1v1h-1zM826,355h1v1h-1zM826,356h1v1h-1zM826,358h1v1h-1zM826,360h1v1h-1zM826,362h1v1h-1zM826,364h1v1h-1zM826,366h1v1h-1zM826,368h1v1h-1zM826,370h1v1h-1zM826,372h1v1h-1zM826,374h1v1h-1zM826,376h1v1h-1zM826,378h1v1h-1zM826,380h1v1h-1zM826,382h1v1h-1zM826,384h1v1h-1zM826,386h1v1h-1zM826,388h1v1h-1zM826,389h1v1h-1zM826,390h1v1h-1zM826,392h1v1h-1zM826,394h1v1h-1zM826,396h1v1h-1zM826,398h1v1h-1zM826,400h1v1h-1zM826,402h1v1h-1zM826,404h1v1h-1zM826,406h1v1h-1zM828,253h1v1h-1zM828,270h1v1h-1zM828,287h1v1h-1zM828,304h1v1h-1zM828,321h1v1h-1zM828,338h1v1h-1zM828,355h1v1h-1zM828,372h1v1h-1zM828,389h1v1h-1zM828,406h1v1h-1zM830,253h1v1h-1zM830,270h1v1h-1zM830,287h1v1h-1zM830,304h1v1h-1zM830,321h1v1h-1zM830,338h1v1h-1zM830,355h1v1h-1zM830,372h1v1h-1zM830,389h1v1h-1zM830,406h1v1h-1zM832,253h1v1h-1zM832,270h1v1h-1zM832,287h1v1h-1zM832,304h1v1h-1zM832,321h1v1h-1zM832,338h1v1h-1zM832,355h1v1h-1zM832,372h1v1h-1zM832,389h1v1h-1zM834,253h1v1h-1zM834,270h1v1h-1zM834,287h1v1h-1zM834,304h1v1h-1zM834,321h1v1h-1zM834,338h1v1h-1zM834,355h1v1h-1zM834,372h1v1h-1zM834,389h1v1h-1zM836,253h1v1h-1zM836,270h1v1h-1zM836,287h1v1h-1zM836,304h1v1h-1zM836,321h1v1h-1zM836,338h1v1h-1zM836,355h1v1h-1zM836,372h1v1h-1zM836,389h1v1h-1zM838,253h1v1h-1zM838,270h1v1h-1zM838,287h1v1h-1zM838,304h1v1h-1zM838,321h1v1h-1zM838,338h1v1h-1zM838,355h1v1h-1zM838,372h1v1h-1zM838,389h1v1h-1zM840,253h1v1h-1zM840,270h1v1h-1zM840,287h1v1h-1zM840,304h1v1h-1zM840,321h1v1h-1zM840,338h1v1h-1zM840,355h1v1h-1zM840,372h1v1h-1zM840,389h1v1h-1zM842,253h1v1h-1zM842,270h1v1h-1zM842,287h1v1h-1zM842,304h1v1h-1zM842,321h1v1h-1zM842,338h1v1h-1zM842,355h1v1h-1zM842,372h1v1h-1zM842,389h1v1h-1z" fill="#808080" shape-rendering="crispEdges"/>
<g shape-rendering="crispEdges"><rect x="795.5" y="45.5" width="8" height="8" fill="#fff" stroke="#000"/><rect x="797" y="49" width="5" height="1" fill="#000"/></g>
<g><path d="M808.5,45.5 L811.5,42.5 H818.5 V54.5 H808.5 Z" fill="url(#gFile)" stroke="#333"/><path d="M808.5,45.5 H811.5 V42.5" fill="#fff" stroke="#333" stroke-width=".8"/></g>
<text x="823.6" y="53" font-weight="bold" font-size="11.6" fill="#000" textLength="67.3" lengthAdjust="spacingAndGlyphs">File: (default)</text>
<g shape-rendering="crispEdges"><rect x="898" y="43" width="57" height="12" fill="#e1e1e1"/><rect x="955" y="43" width="1" height="13" fill="#222"/><rect x="897" y="55" width="59" height="1" fill="#222"/></g>
<text x="900.3" y="53" font-size="11.6" fill="#000" textLength="52" lengthAdjust="spacingAndGlyphs">File/String</text>
<g shape-rendering="crispEdges"><rect x="804.5" y="62.5" width="8" height="8" fill="#fff" stroke="#000"/><rect x="806" y="66" width="5" height="1" fill="#000"/></g>

<text x="832.3" y="70" font-style="italic" font-size="11.6" fill="#000" textLength="28.5" lengthAdjust="spacingAndGlyphs">object</text>

<text x="841.3" y="87" font-weight="bold" font-size="11.6" fill="#000" textLength="30" lengthAdjust="spacingAndGlyphs">Name</text>

<text x="841.3" y="104" font-weight="bold" font-size="11.6" fill="#000" textLength="20" lengthAdjust="spacingAndGlyphs">City</text>

<text x="841.3" y="121" font-weight="bold" font-size="11.6" fill="#000" textLength="25.4" lengthAdjust="spacingAndGlyphs">State</text>

<text x="841.3" y="138" font-weight="bold" font-size="11.6" fill="#000" textLength="25" lengthAdjust="spacingAndGlyphs">ICAO</text>

<text x="841.3" y="155" font-weight="bold" font-size="11.6" fill="#000" textLength="22.4" lengthAdjust="spacingAndGlyphs">IATA</text>

<text x="841.3" y="172" font-weight="bold" font-size="11.6" fill="#000" textLength="91.7" lengthAdjust="spacingAndGlyphs">SupportedAirport</text>

<text x="841.3" y="189" font-weight="bold" font-size="11.6" fill="#000" textLength="29" lengthAdjust="spacingAndGlyphs">Delay</text>

<text x="841.3" y="206" font-weight="bold" font-size="11.6" fill="#000" textLength="60.8" lengthAdjust="spacingAndGlyphs">DelayCount</text>
<g shape-rendering="crispEdges"><rect x="813.5" y="215.5" width="8" height="8" fill="#fff" stroke="#000"/><rect x="815" y="219" width="5" height="1" fill="#000"/></g>

<text x="841.3" y="223" font-weight="bold" font-size="11.6" fill="#000" textLength="31.8" lengthAdjust="spacingAndGlyphs">Status</text>
<g shape-rendering="crispEdges"><rect x="822.5" y="232.5" width="8" height="8" fill="#fff" stroke="#000"/><rect x="824" y="236" width="5" height="1" fill="#000"/></g>

<text x="850.3" y="240" font-style="italic" font-size="11.6" fill="#000" textLength="28.5" lengthAdjust="spacingAndGlyphs">object</text>

<text x="859.3" y="257" font-weight="bold" font-size="11.6" fill="#000" textLength="24.2" lengthAdjust="spacingAndGlyphs">Type</text>

<text x="859.3" y="274" font-weight="bold" font-size="11.6" fill="#000" textLength="36.9" lengthAdjust="spacingAndGlyphs">Reason</text>

<text x="859.3" y="291" font-weight="bold" font-size="11.6" fill="#000" textLength="49" lengthAdjust="spacingAndGlyphs">AvgDelay</text>

<text x="859.3" y="308" font-weight="bold" font-size="11.6" fill="#000" textLength="58.1" lengthAdjust="spacingAndGlyphs">ClosureEnd</text>

<text x="859.3" y="325" font-weight="bold" font-size="11.6" fill="#000" textLength="68.1" lengthAdjust="spacingAndGlyphs">ClosureBegin</text>

<text x="859.3" y="342" font-weight="bold" font-size="11.6" fill="#000" textLength="49" lengthAdjust="spacingAndGlyphs">MinDelay</text>

<text x="859.3" y="359" font-weight="bold" font-size="11.6" fill="#000" textLength="27.8" lengthAdjust="spacingAndGlyphs">Trend</text>

<text x="859.3" y="376" font-weight="bold" font-size="11.6" fill="#000" textLength="44.4" lengthAdjust="spacingAndGlyphs">EndTime</text>

<text x="859.3" y="393" font-weight="bold" font-size="11.6" fill="#000" textLength="51.1" lengthAdjust="spacingAndGlyphs">MaxDelay</text>
<g shape-rendering="crispEdges"><rect x="831.5" y="402.5" width="8" height="8" fill="#fff" stroke="#000"/><rect x="833" y="406" width="5" height="1" fill="#000"/><rect x="835" y="404" width="1" height="5" fill="#000"/></g>
<rect x="847.5" y="403.5" width="5" height="4" fill="#9db6f2" stroke="#0a4ae0" shape-rendering="crispEdges"/>
<text x="859.3" y="410" font-style="italic" font-size="11.6" fill="#000" textLength="97.7" lengthAdjust="spacingAndGlyphs">property (additional)</text>
<g shape-rendering="crispEdges"><rect x="813.5" y="419.5" width="8" height="8" fill="#fff" stroke="#000"/><rect x="815" y="423" width="5" height="1" fill="#000"/></g>

<text x="841.3" y="427" font-weight="bold" font-size="11.6" fill="#000" textLength="44" lengthAdjust="spacingAndGlyphs">Weather</text>
<text x="890.3" y="427" font-size="11.6" fill="#959595" textLength="42" lengthAdjust="spacingAndGlyphs">weather</text>
<g shape-rendering="crispEdges"><rect x="822.5" y="436.5" width="8" height="8" fill="#fff" stroke="#000"/><rect x="824" y="440" width="5" height="1" fill="#000"/><rect x="826" y="438" width="1" height="5" fill="#000"/></g>

<text x="850.3" y="444" font-weight="bold" font-size="11.6" fill="#000" textLength="43" lengthAdjust="spacingAndGlyphs">Visibility</text>
<g shape-rendering="crispEdges"><rect x="822.5" y="453.5" width="8" height="8" fill="#fff" stroke="#000"/><rect x="824" y="457" width="5" height="1" fill="#000"/><rect x="826" y="455" width="1" height="5" fill="#000"/></g>

<text x="850.3" y="461" font-weight="bold" font-size="11.6" fill="#000" textLength="44" lengthAdjust="spacingAndGlyphs">Weather</text>
<g shape-rendering="crispEdges"><rect x="822.5" y="470.5" width="8" height="8" fill="#fff" stroke="#000"/><rect x="824" y="474" width="5" height="1" fill="#000"/><rect x="826" y="472" width="1" height="5" fill="#000"/></g>

<text x="850.3" y="478" font-weight="bold" font-size="11.6" fill="#000" textLength="27.2" lengthAdjust="spacingAndGlyphs">Temp</text>
<g shape-rendering="crispEdges"><rect x="822.5" y="487.5" width="8" height="8" fill="#fff" stroke="#000"/><rect x="824" y="491" width="5" height="1" fill="#000"/><rect x="826" y="489" width="1" height="5" fill="#000"/></g>

<text x="850.3" y="495" font-weight="bold" font-size="11.6" fill="#000" textLength="27.2" lengthAdjust="spacingAndGlyphs">Wind</text>
<g shape-rendering="crispEdges"><rect x="822.5" y="504.5" width="8" height="8" fill="#fff" stroke="#000"/><rect x="824" y="508" width="5" height="1" fill="#000"/><rect x="826" y="506" width="1" height="5" fill="#000"/></g>

<text x="850.3" y="512" font-weight="bold" font-size="11.6" fill="#000" textLength="26.5" lengthAdjust="spacingAndGlyphs">Meta</text>
<text x="881.8" y="512" font-size="11.6" fill="#959595" textLength="24" lengthAdjust="spacingAndGlyphs">meta</text>
<g shape-rendering="crispEdges"><rect x="822.5" y="521.5" width="8" height="8" fill="#fff" stroke="#000"/><rect x="824" y="525" width="5" height="1" fill="#000"/><rect x="826" y="523" width="1" height="5" fill="#000"/></g>
<rect x="838.5" y="522.5" width="5" height="4" fill="#9db6f2" stroke="#0a4ae0" shape-rendering="crispEdges"/>
<text x="850.3" y="529" font-style="italic" font-size="11.6" fill="#000" textLength="97.7" lengthAdjust="spacingAndGlyphs">property (additional)</text>
<g shape-rendering="crispEdges"><rect x="813.5" y="538.5" width="8" height="8" fill="#fff" stroke="#000"/><rect x="815" y="542" width="5" height="1" fill="#000"/><rect x="817" y="540" width="1" height="5" fill="#000"/></g>
<rect x="829.5" y="539.5" width="5" height="4" fill="#9db6f2" stroke="#0a4ae0" shape-rendering="crispEdges"/>
<text x="841.3" y="546" font-style="italic" font-size="11.6" fill="#000" textLength="97.7" lengthAdjust="spacingAndGlyphs">property (additional)</text>
<path d="M976,574.5 L976,581 L969.5,581 Z" fill="#d8d8d8"/><path d="M970,581.5 L976.5,575 M972,581.5 L976.5,577 M974,581.5 L976.5,579" stroke="#8e8e8e" stroke-width="1"/>
</g>
<g id="icontext" style="will-change:transform"><text transform="translate(23.6,55.2) scale(.84,1)" font-weight="bold" font-size="10.2" fill="#8b0000" stroke="#fff" stroke-width="2" stroke-linejoin="round" paint-order="stroke" letter-spacing="1">C=</text><text transform="translate(511.77,119.55) scale(1.204,1)" font-size="11.8" font-weight="bold" fill="#8a0f0f">{</text><text transform="translate(520.70,119.55) scale(1.200,1)" font-size="11.8" font-weight="bold" fill="#8a0f0f">}</text><text x="520.58" y="137.5" font-size="10" fill="#0a40d8" stroke="#0a40d8" stroke-width=".15">&quot;</text><text x="524.9" y="137" font-family="Liberation Mono, monospace" font-weight="bold" font-size="9" fill="#0a40d8" stroke="#0a40d8" stroke-width=".22" textLength="7.8" lengthAdjust="spacingAndGlyphs">AB</text><text x="532.58" y="137.5" font-size="10" fill="#0a40d8" stroke="#0a40d8" stroke-width=".15">&quot;</text><text x="520.58" y="154.5" font-size="10" fill="#0a40d8" stroke="#0a40d8" stroke-width=".15">&quot;</text><text x="524.9" y="154" font-family="Liberation Mono, monospace" font-weight="bold" font-size="9" fill="#0a40d8" stroke="#0a40d8" stroke-width=".22" textLength="7.8" lengthAdjust="spacingAndGlyphs">AB</text><text x="532.58" y="154.5" font-size="10" fill="#0a40d8" stroke="#0a40d8" stroke-width=".15">&quot;</text><text x="520.58" y="171.5" font-size="10" fill="#0a40d8" stroke="#0a40d8" stroke-width=".15">&quot;</text><text x="524.9" y="171" font-family="Liberation Mono, monospace" font-weight="bold" font-size="9" fill="#0a40d8" stroke="#0a40d8" stroke-width=".22" textLength="7.8" lengthAdjust="spacingAndGlyphs">AB</text><text x="532.58" y="171.5" font-size="10" fill="#0a40d8" stroke="#0a40d8" stroke-width=".15">&quot;</text><text x="520.58" y="188.5" font-size="10" fill="#0a40d8" stroke="#0a40d8" stroke-width=".15">&quot;</text><text x="524.9" y="188" font-family="Liberation Mono, monospace" font-weight="bold" font-size="9" fill="#0a40d8" stroke="#0a40d8" stroke-width=".22" textLength="7.8" lengthAdjust="spacingAndGlyphs">AB</text><text x="532.58" y="188.5" font-size="10" fill="#0a40d8" stroke="#0a40d8" stroke-width=".15">&quot;</text><text x="520.58" y="205.5" font-size="10" fill="#0a40d8" stroke="#0a40d8" stroke-width=".15">&quot;</text><text x="524.9" y="205" font-family="Liberation Mono, monospace" font-weight="bold" font-size="9" fill="#0a40d8" stroke="#0a40d8" stroke-width=".22" textLength="7.8" lengthAdjust="spacingAndGlyphs">AB</text><text x="532.58" y="205.5" font-size="10" fill="#0a40d8" stroke="#0a40d8" stroke-width=".15">&quot;</text><text x="522.7" y="222.2" font-size="9.4" fill="#0a40d8" stroke="#0a40d8" stroke-width=".22" textLength="9.1" lengthAdjust="spacingAndGlyphs">01</text><text x="522.7" y="239.2" font-size="9.4" fill="#0a40d8" stroke="#0a40d8" stroke-width=".22" textLength="9.1" lengthAdjust="spacingAndGlyphs">01</text><text x="524" y="256.3" font-style="italic" font-size="10.8" fill="#0a40d8" stroke="#0a40d8" stroke-width=".15" textLength="7.8" lengthAdjust="spacingAndGlyphs">#</text><text transform="translate(521.15,272.55) scale(1.279,1)" font-size="11.8" font-weight="bold" fill="#8a0f0f">[</text><text transform="translate(529.82,272.55) scale(1.279,1)" font-size="11.8" font-weight="bold" fill="#8a0f0f">]</text><text transform="translate(529.77,289.55) scale(1.204,1)" font-size="11.8" font-weight="bold" fill="#8a0f0f">{</text><text transform="translate(538.70,289.55) scale(1.200,1)" font-size="11.8" font-weight="bold" fill="#8a0f0f">}</text><text x="538.58" y="307.5" font-size="10" fill="#0a40d8" stroke="#0a40d8" stroke-width=".15">&quot;</text><text x="542.9" y="307" font-family="Liberation Mono, monospace" font-weight="bold" font-size="9" fill="#0a40d8" stroke="#0a40d8" stroke-width=".22" textLength="7.8" lengthAdjust="spacingAndGlyphs">AB</text><text x="550.58" y="307.5" font-size="10" fill="#0a40d8" stroke="#0a40d8" stroke-width=".15">&quot;</text><text x="538.58" y="324.5" font-size="10" fill="#0a40d8" stroke="#0a40d8" stroke-width=".15">&quot;</text><text x="542.9" y="324" font-family="Liberation Mono, monospace" font-weight="bold" font-size="9" fill="#0a40d8" stroke="#0a40d8" stroke-width=".22" textLength="7.8" lengthAdjust="spacingAndGlyphs">AB</text><text x="550.58" y="324.5" font-size="10" fill="#0a40d8" stroke="#0a40d8" stroke-width=".15">&quot;</text><text x="538.58" y="341.5" font-size="10" fill="#0a40d8" stroke="#0a40d8" stroke-width=".15">&quot;</text><text x="542.9" y="341" font-family="Liberation Mono, monospace" font-weight="bold" font-size="9" fill="#0a40d8" stroke="#0a40d8" stroke-width=".22" textLength="7.8" lengthAdjust="spacingAndGlyphs">AB</text><text x="550.58" y="341.5" font-size="10" fill="#0a40d8" stroke="#0a40d8" stroke-width=".15">&quot;</text><text x="538.58" y="358.5" font-size="10" fill="#0a40d8" stroke="#0a40d8" stroke-width=".15">&quot;</text><text x="542.9" y="358" font-family="Liberation Mono, monospace" font-weight="bold" font-size="9" fill="#0a40d8" stroke="#0a40d8" stroke-width=".22" textLength="7.8" lengthAdjust="spacingAndGlyphs">AB</text><text x="550.58" y="358.5" font-size="10" fill="#0a40d8" stroke="#0a40d8" stroke-width=".15">&quot;</text><text x="538.58" y="375.5" font-size="10" fill="#0a40d8" stroke="#0a40d8" stroke-width=".15">&quot;</text><text x="542.9" y="375" font-family="Liberation Mono, monospace" font-weight="bold" font-size="9" fill="#0a40d8" stroke="#0a40d8" stroke-width=".22" textLength="7.8" lengthAdjust="spacingAndGlyphs">AB</text><text x="550.58" y="375.5" font-size="10" fill="#0a40d8" stroke="#0a40d8" stroke-width=".15">&quot;</text><text x="538.58" y="392.5" font-size="10" fill="#0a40d8" stroke="#0a40d8" stroke-width=".15">&quot;</text><text x="542.9" y="392" font-family="Liberation Mono, monospace" font-weight="bold" font-size="9" fill="#0a40d8" stroke="#0a40d8" stroke-width=".22" textLength="7.8" lengthAdjust="spacingAndGlyphs">AB</text><text x="550.58" y="392.5" font-size="10" fill="#0a40d8" stroke="#0a40d8" stroke-width=".15">&quot;</text><text x="538.58" y="409.5" font-size="10" fill="#0a40d8" stroke="#0a40d8" stroke-width=".15">&quot;</text><text x="542.9" y="409" font-family="Liberation Mono, monospace" font-weight="bold" font-size="9" fill="#0a40d8" stroke="#0a40d8" stroke-width=".22" textLength="7.8" lengthAdjust="spacingAndGlyphs">AB</text><text x="550.58" y="409.5" font-size="10" fill="#0a40d8" stroke="#0a40d8" stroke-width=".15">&quot;</text><text x="538.58" y="426.5" font-size="10" fill="#0a40d8" stroke="#0a40d8" stroke-width=".15">&quot;</text><text x="542.9" y="426" font-family="Liberation Mono, monospace" font-weight="bold" font-size="9" fill="#0a40d8" stroke="#0a40d8" stroke-width=".22" textLength="7.8" lengthAdjust="spacingAndGlyphs">AB</text><text x="550.58" y="426.5" font-size="10" fill="#0a40d8" stroke="#0a40d8" stroke-width=".15">&quot;</text><text x="538.58" y="443.5" font-size="10" fill="#0a40d8" stroke="#0a40d8" stroke-width=".15">&quot;</text><text x="542.9" y="443" font-family="Liberation Mono, monospace" font-weight="bold" font-size="9" fill="#0a40d8" stroke="#0a40d8" stroke-width=".22" textLength="7.8" lengthAdjust="spacingAndGlyphs">AB</text><text x="550.58" y="443.5" font-size="10" fill="#0a40d8" stroke="#0a40d8" stroke-width=".15">&quot;</text><text transform="translate(538.77,459.55) scale(1.134,1)" font-size="11.8" fill="#6e6e6e">{</text><text transform="translate(548.77,459.55) scale(1.134,1)" font-size="11.8" fill="#6e6e6e">}</text><text transform="translate(520.77,476.55) scale(1.204,1)" font-size="11.8" font-weight="bold" fill="#8a0f0f">{</text><text transform="translate(529.70,476.55) scale(1.200,1)" font-size="11.8" font-weight="bold" fill="#8a0f0f">}</text><text transform="translate(530.15,493.55) scale(1.279,1)" font-size="11.8" font-weight="bold" fill="#8a0f0f">[</text><text transform="translate(538.82,493.55) scale(1.279,1)" font-size="11.8" font-weight="bold" fill="#8a0f0f">]</text><text transform="translate(530.15,510.55) scale(1.279,1)" font-size="11.8" font-weight="bold" fill="#8a0f0f">[</text><text transform="translate(538.82,510.55) scale(1.279,1)" font-size="11.8" font-weight="bold" fill="#8a0f0f">]</text><text transform="translate(530.15,527.55) scale(1.279,1)" font-size="11.8" font-weight="bold" fill="#8a0f0f">[</text><text transform="translate(538.82,527.55) scale(1.279,1)" font-size="11.8" font-weight="bold" fill="#8a0f0f">]</text><text transform="translate(530.15,544.55) scale(1.279,1)" font-size="11.8" font-weight="bold" fill="#8a0f0f">[</text><text transform="translate(538.82,544.55) scale(1.279,1)" font-size="11.8" font-weight="bold" fill="#8a0f0f">]</text><text transform="translate(530.15,561.55) scale(1.279,1)" font-size="11.8" font-weight="bold" fill="#8a0f0f">[</text><text transform="translate(538.82,561.55) scale(1.279,1)" font-size="11.8" font-weight="bold" fill="#8a0f0f">]</text><text transform="translate(529.77,578.55) scale(1.134,1)" font-size="11.8" fill="#6e6e6e">{</text><text transform="translate(539.77,578.55) scale(1.134,1)" font-size="11.8" fill="#6e6e6e">}</text><text transform="translate(520.77,595.55) scale(1.134,1)" font-size="11.8" fill="#6e6e6e">{</text><text transform="translate(530.77,595.55) scale(1.134,1)" font-size="11.8" fill="#6e6e6e">}</text><text x="792.1" y="32" font-weight="bold" font-size="7" fill="#fff" stroke="#fff" stroke-width=".2" textLength="15.7" lengthAdjust="spacingAndGlyphs">JSON</text><text transform="translate(815.77,68.55) scale(1.204,1)" font-size="11.8" font-weight="bold" fill="#8a0f0f">{</text><text transform="translate(824.70,68.55) scale(1.200,1)" font-size="11.8" font-weight="bold" fill="#8a0f0f">}</text><text x="824.58" y="86.5" font-size="10" fill="#0a40d8" stroke="#0a40d8" stroke-width=".15">&quot;</text><text x="828.9" y="86" font-family="Liberation Mono, monospace" font-weight="bold" font-size="9" fill="#0a40d8" stroke="#0a40d8" stroke-width=".22" textLength="7.8" lengthAdjust="spacingAndGlyphs">AB</text><text x="836.58" y="86.5" font-size="10" fill="#0a40d8" stroke="#0a40d8" stroke-width=".15">&quot;</text><text x="824.58" y="103.5" font-size="10" fill="#0a40d8" stroke="#0a40d8" stroke-width=".15">&quot;</text><text x="828.9" y="103" font-family="Liberation Mono, monospace" font-weight="bold" font-size="9" fill="#0a40d8" stroke="#0a40d8" stroke-width=".22" textLength="7.8" lengthAdjust="spacingAndGlyphs">AB</text><text x="836.58" y="103.5" font-size="10" fill="#0a40d8" stroke="#0a40d8" stroke-width=".15">&quot;</text><text x="824.58" y="120.5" font-size="10" fill="#0a40d8" stroke="#0a40d8" stroke-width=".15">&quot;</text><text x="828.9" y="120" font-family="Liberation Mono, monospace" font-weight="bold" font-size="9" fill="#0a40d8" stroke="#0a40d8" stroke-width=".22" textLength="7.8" lengthAdjust="spacingAndGlyphs">AB</text><text x="836.58" y="120.5" font-size="10" fill="#0a40d8" stroke="#0a40d8" stroke-width=".15">&quot;</text><text x="824.58" y="137.5" font-size="10" fill="#0a40d8" stroke="#0a40d8" stroke-width=".15">&quot;</text><text x="828.9" y="137" font-family="Liberation Mono, monospace" font-weight="bold" font-size="9" fill="#0a40d8" stroke="#0a40d8" stroke-width=".22" textLength="7.8" lengthAdjust="spacingAndGlyphs">AB</text><text x="836.58" y="137.5" font-size="10" fill="#0a40d8" stroke="#0a40d8" stroke-width=".15">&quot;</text><text x="824.58" y="154.5" font-size="10" fill="#0a40d8" stroke="#0a40d8" stroke-width=".15">&quot;</text><text x="828.9" y="154" font-family="Liberation Mono, monospace" font-weight="bold" font-size="9" fill="#0a40d8" stroke="#0a40d8" stroke-width=".22" textLength="7.8" lengthAdjust="spacingAndGlyphs">AB</text><text x="836.58" y="154.5" font-size="10" fill="#0a40d8" stroke="#0a40d8" stroke-width=".15">&quot;</text><text x="826.7" y="171.2" font-size="9.4" fill="#0a40d8" stroke="#0a40d8" stroke-width=".22" textLength="9.1" lengthAdjust="spacingAndGlyphs">01</text><text x="826.7" y="188.2" font-size="9.4" fill="#0a40d8" stroke="#0a40d8" stroke-width=".22" textLength="9.1" lengthAdjust="spacingAndGlyphs">01</text><text x="828" y="205.3" font-style="italic" font-size="10.8" fill="#0a40d8" stroke="#0a40d8" stroke-width=".15" textLength="7.8" lengthAdjust="spacingAndGlyphs">#</text><text transform="translate(825.15,221.55) scale(1.279,1)" font-size="11.8" font-weight="bold" fill="#8a0f0f">[</text><text transform="translate(833.82,221.55) scale(1.279,1)" font-size="11.8" font-weight="bold" fill="#8a0f0f">]</text><text transform="translate(833.77,238.55) scale(1.204,1)" font-size="11.8" font-weight="bold" fill="#8a0f0f">{</text><text transform="translate(842.70,238.55) scale(1.200,1)" font-size="11.8" font-weight="bold" fill="#8a0f0f">}</text><text x="842.58" y="256.5" font-size="10" fill="#0a40d8" stroke="#0a40d8" stroke-width=".15">&quot;</text><text x="846.9" y="256" font-family="Liberation Mono, monospace" font-weight="bold" font-size="9" fill="#0a40d8" stroke="#0a40d8" stroke-width=".22" textLength="7.8" lengthAdjust="spacingAndGlyphs">AB</text><text x="854.58" y="256.5" font-size="10" fill="#0a40d8" stroke="#0a40d8" stroke-width=".15">&quot;</text><text x="842.58" y="273.5" font-size="10" fill="#0a40d8" stroke="#0a40d8" stroke-width=".15">&quot;</text><text x="846.9" y="273" font-family="Liberation Mono, monospace" font-weight="bold" font-size="9" fill="#0a40d8" stroke="#0a40d8" stroke-width=".22" textLength="7.8" lengthAdjust="spacingAndGlyphs">AB</text><text x="854.58" y="273.5" font-size="10" fill="#0a40d8" stroke="#0a40d8" stroke-width=".15">&quot;</text><text x="842.58" y="290.5" font-size="10" fill="#0a40d8" stroke="#0a40d8" stroke-width=".15">&quot;</text><text x="846.9" y="290" font-family="Liberation Mono, monospace" font-weight="bold" font-size="9" fill="#0a40d8" stroke="#0a40d8" stroke-width=".22" textLength="7.8" lengthAdjust="spacingAndGlyphs">AB</text><text x="854.58" y="290.5" font-size="10" fill="#0a40d8" stroke="#0a40d8" stroke-width=".15">&quot;</text><text x="842.58" y="307.5" font-size="10" fill="#0a40d8" stroke="#0a40d8" stroke-width=".15">&quot;</text><text x="846.9" y="307" font-family="Liberation Mono, monospace" font-weight="bold" font-size="9" fill="#0a40d8" stroke="#0a40d8" stroke-width=".22" textLength="7.8" lengthAdjust="spacingAndGlyphs">AB</text><text x="854.58" y="307.5" font-size="10" fill="#0a40d8" stroke="#0a40d8" stroke-width=".15">&quot;</text><text x="842.58" y="324.5" font-size="10" fill="#0a40d8" stroke="#0a40d8" stroke-width=".15">&quot;</text><text x="846.9" y="324" font-family="Liberation Mono, monospace" font-weight="bold" font-size="9" fill="#0a40d8" stroke="#0a40d8" stroke-width=".22" textLength="7.8" lengthAdjust="spacingAndGlyphs">AB</text><text x="854.58" y="324.5" font-size="10" fill="#0a40d8" stroke="#0a40d8" stroke-width=".15">&quot;</text><text x="842.58" y="341.5" font-size="10" fill="#0a40d8" stroke="#0a40d8" stroke-width=".15">&quot;</text><text x="846.9" y="341" font-family="Liberation Mono, monospace" font-weight="bold" font-size="9" fill="#0a40d8" stroke="#0a40d8" stroke-width=".22" textLength="7.8" lengthAdjust="spacingAndGlyphs">AB</text><text x="854.58" y="341.5" font-size="10" fill="#0a40d8" stroke="#0a40d8" stroke-width=".15">&quot;</text><text x="842.58" y="358.5" font-size="10" fill="#0a40d8" stroke="#0a40d8" stroke-width=".15">&quot;</text><text x="846.9" y="358" font-family="Liberation Mono, monospace" font-weight="bold" font-size="9" fill="#0a40d8" stroke="#0a40d8" stroke-width=".22" textLength="7.8" lengthAdjust="spacingAndGlyphs">AB</text><text x="854.58" y="358.5" font-size="10" fill="#0a40d8" stroke="#0a40d8" stroke-width=".15">&quot;</text><text x="842.58" y="375.5" font-size="10" fill="#0a40d8" stroke="#0a40d8" stroke-width=".15">&quot;</text><text x="846.9" y="375" font-family="Liberation Mono, monospace" font-weight="bold" font-size="9" fill="#0a40d8" stroke="#0a40d8" stroke-width=".22" textLength="7.8" lengthAdjust="spacingAndGlyphs">AB</text><text x="854.58" y="375.5" font-size="10" fill="#0a40d8" stroke="#0a40d8" stroke-width=".15">&quot;</text><text x="842.58" y="392.5" font-size="10" fill="#0a40d8" stroke="#0a40d8" stroke-width=".15">&quot;</text><text x="846.9" y="392" font-family="Liberation Mono, monospace" font-weight="bold" font-size="9" fill="#0a40d8" stroke="#0a40d8" stroke-width=".22" textLength="7.8" lengthAdjust="spacingAndGlyphs">AB</text><text x="854.58" y="392.5" font-size="10" fill="#0a40d8" stroke="#0a40d8" stroke-width=".15">&quot;</text><text transform="translate(842.77,408.55) scale(1.134,1)" font-size="11.8" fill="#6e6e6e">{</text><text transform="translate(852.77,408.55) scale(1.134,1)" font-size="11.8" fill="#6e6e6e">}</text><text transform="translate(824.77,425.55) scale(1.204,1)" font-size="11.8" font-weight="bold" fill="#8a0f0f">{</text><text transform="translate(833.70,425.55) scale(1.200,1)" font-size="11.8" font-weight="bold" fill="#8a0f0f">}</text><text transform="translate(834.15,442.55) scale(1.279,1)" font-size="11.8" font-weight="bold" fill="#8a0f0f">[</text><text transform="translate(842.82,442.55) scale(1.279,1)" font-size="11.8" font-weight="bold" fill="#8a0f0f">]</text><text transform="translate(834.15,459.55) scale(1.279,1)" font-size="11.8" font-weight="bold" fill="#8a0f0f">[</text><text transform="translate(842.82,459.55) scale(1.279,1)" font-size="11.8" font-weight="bold" fill="#8a0f0f">]</text><text transform="translate(834.15,476.55) scale(1.279,1)" font-size="11.8" font-weight="bold" fill="#8a0f0f">[</text><text transform="translate(842.82,476.55) scale(1.279,1)" font-size="11.8" font-weight="bold" fill="#8a0f0f">]</text><text transform="translate(834.15,493.55) scale(1.279,1)" font-size="11.8" font-weight="bold" fill="#8a0f0f">[</text><text transform="translate(842.82,493.55) scale(1.279,1)" font-size="11.8" font-weight="bold" fill="#8a0f0f">]</text><text transform="translate(834.15,510.55) scale(1.279,1)" font-size="11.8" font-weight="bold" fill="#8a0f0f">[</text><text transform="translate(842.82,510.55) scale(1.279,1)" font-size="11.8" font-weight="bold" fill="#8a0f0f">]</text><text transform="translate(833.77,527.55) scale(1.134,1)" font-size="11.8" fill="#6e6e6e">{</text><text transform="translate(843.77,527.55) scale(1.134,1)" font-size="11.8" fill="#6e6e6e">}</text><text transform="translate(824.77,544.55) scale(1.134,1)" font-size="11.8" fill="#6e6e6e">{</text><text transform="translate(834.77,544.55) scale(1.134,1)" font-size="11.8" fill="#6e6e6e">}</text></g>
<g id="lines" fill="none" stroke="#141414" stroke-width="1.25">
<path d="M83,52.5 H93.5 L95.5,73.5 H107"/>
<path d="M231,73.5 H241.5 L270,66.5 H282"/>
<path d="M680,117.5 H689.5 L775.5,66.5 H787"/>
<path d="M680,134.5 H689.5 L775.5,83.5 H787"/>
<path d="M680,151.5 H689.5 L775.5,100.5 H787"/>
<path d="M680,168.5 H689.5 L775.5,117.5 H787"/>
<path d="M680,185.5 H689.5 L775.5,134.5 H787"/>
<path d="M680,202.5 H689.5 L775.5,151.5 H787"/>
<path d="M680,219.5 H689.5 L775.5,168.5 H787"/>
<path d="M680,236.5 H689.5 L775.5,185.5 H787"/>
<path d="M680,253.5 H689.5 L775.5,202.5 H787"/>
<path d="M680,287.5 H689.5 L775.5,236.5 H787"/>
<path d="M680,304.5 H689.5 L775.5,253.5 H787"/>
<path d="M680,321.5 H689.5 L775.5,270.5 H787"/>
<path d="M680,338.5 H689.5 L775.5,287.5 H787"/>
<path d="M680,355.5 H689.5 L775.5,304.5 H787"/>
<path d="M680,372.5 H689.5 L775.5,321.5 H787"/>
<path d="M680,389.5 H689.5 L775.5,338.5 H787"/>
<path d="M680,406.5 H689.5 L775.5,355.5 H787"/>
<path d="M680,423.5 H689.5 L775.5,372.5 H787"/>
<path d="M680,440.5 H689.5 L775.5,389.5 H787"/>
<path d="M680,494.5 H689.5 L775.5,443.5 H787"/>
<path d="M680,511.5 H689.5 L775.5,460.5 H787"/>
<path d="M680,528.5 H689.5 L775.5,477.5 H787"/>
<path d="M680,545.5 H689.5 L775.5,494.5 H787"/>
<path d="M680,562.5 H689.5 L775.5,511.5 H787"/>
</g>
<g id="conn">
<path d="M76.7,48.65 H77.9 L83.5,52.5 L77.9,56.35 H76.7 Z" fill="#008585" stroke="#0c0c0c" stroke-width="1.25" stroke-linejoin="miter"/>
<path d="M106.5,69.5 L113.8,73.5 L106.5,77.5 Z" fill="#008585"/><path d="M106,69h1v1h-1zM106,71h1v1h-1zM106,75h1v1h-1zM106,77h1v1h-1zM108,70h1v1h-1zM110,71h1v1h-1zM112,72h1v1h-1zM113,73h1v1h-1zM112,74h1v1h-1zM110,75h1v1h-1zM108,76h1v1h-1z" fill="#000" shape-rendering="crispEdges"/>
<path d="M224.7,69.65 H225.9 L231.5,73.5 L225.9,77.35 H224.7 Z" fill="#008585" stroke="#0c0c0c" stroke-width="1.25" stroke-linejoin="miter"/>
<path d="M281.7,45.65 H282.9 L288.5,49.5 L282.9,53.35 H281.7 Z" fill="#fff" stroke="#0c0c0c" stroke-width="1.25" stroke-linejoin="miter"/>
<path d="M281.7,62.65 H282.9 L288.5,66.5 L282.9,70.35 H281.7 Z" fill="#008585" stroke="#0c0c0c" stroke-width="1.25" stroke-linejoin="miter"/>
<path d="M281.7,79.65 H282.9 L288.5,83.5 L282.9,87.35 H281.7 Z" fill="#fff" stroke="#0c0c0c" stroke-width="1.25" stroke-linejoin="miter"/>
<path d="M672.7,45.65 H673.9 L679.5,49.5 L673.9,53.35 H672.7 Z" fill="#fff" stroke="#0c0c0c" stroke-width="1.25" stroke-linejoin="miter"/>
<path d="M672.7,62.65 H673.9 L679.5,66.5 L673.9,70.35 H672.7 Z" fill="#fff" stroke="#0c0c0c" stroke-width="1.25" stroke-linejoin="miter"/>
<path d="M672.7,82.65 H673.9 L679.5,86.5 L673.9,90.35 H672.7 Z" fill="#c2c2c2" stroke="#0c0c0c" stroke-width="1.25" stroke-linejoin="miter"/><path d="M672.7,79.65 H673.9 L679.5,83.5 L673.9,87.35 H672.7 Z" fill="#fff" stroke="#0c0c0c" stroke-width="1.25" stroke-linejoin="miter"/>
<path d="M672.7,96.65 H673.9 L679.5,100.5 L673.9,104.35 H672.7 Z" fill="#fff" stroke="#0c0c0c" stroke-width="1.25" stroke-linejoin="miter"/>
<path d="M672.7,113.65 H673.9 L679.5,117.5 L673.9,121.35 H672.7 Z" fill="#008585" stroke="#0c0c0c" stroke-width="1.25" stroke-linejoin="miter"/>
<path d="M672.7,130.65 H673.9 L679.5,134.5 L673.9,138.35 H672.7 Z" fill="#008585" stroke="#0c0c0c" stroke-width="1.25" stroke-linejoin="miter"/>
<path d="M672.7,147.65 H673.9 L679.5,151.5 L673.9,155.35 H672.7 Z" fill="#008585" stroke="#0c0c0c" stroke-width="1.25" stroke-linejoin="miter"/>
<path d="M672.7,164.65 H673.9 L679.5,168.5 L673.9,172.35 H672.7 Z" fill="#008585" stroke="#0c0c0c" stroke-width="1.25" stroke-linejoin="miter"/>
<path d="M672.7,181.65 H673.9 L679.5,185.5 L673.9,189.35 H672.7 Z" fill="#008585" stroke="#0c0c0c" stroke-width="1.25" stroke-linejoin="miter"/>
<path d="M672.7,198.65 H673.9 L679.5,202.5 L673.9,206.35 H672.7 Z" fill="#008585" stroke="#0c0c0c" stroke-width="1.25" stroke-linejoin="miter"/>
<path d="M672.7,215.65 H673.9 L679.5,219.5 L673.9,223.35 H672.7 Z" fill="#008585" stroke="#0c0c0c" stroke-width="1.25" stroke-linejoin="miter"/>
<path d="M672.7,232.65 H673.9 L679.5,236.5 L673.9,240.35 H672.7 Z" fill="#008585" stroke="#0c0c0c" stroke-width="1.25" stroke-linejoin="miter"/>
<path d="M672.7,249.65 H673.9 L679.5,253.5 L673.9,257.35 H672.7 Z" fill="#008585" stroke="#0c0c0c" stroke-width="1.25" stroke-linejoin="miter"/>
<path d="M672.7,266.65 H673.9 L679.5,270.5 L673.9,274.35 H672.7 Z" fill="#fff" stroke="#0c0c0c" stroke-width="1.25" stroke-linejoin="miter"/>
<path d="M672.7,283.65 H673.9 L679.5,287.5 L673.9,291.35 H672.7 Z" fill="#008585" stroke="#0c0c0c" stroke-width="1.25" stroke-linejoin="miter"/>
<path d="M672.7,300.65 H673.9 L679.5,304.5 L673.9,308.35 H672.7 Z" fill="#008585" stroke="#0c0c0c" stroke-width="1.25" stroke-linejoin="miter"/>
<path d="M672.7,317.65 H673.9 L679.5,321.5 L673.9,325.35 H672.7 Z" fill="#008585" stroke="#0c0c0c" stroke-width="1.25" stroke-linejoin="miter"/>
<path d="M672.7,334.65 H673.9 L679.5,338.5 L673.9,342.35 H672.7 Z" fill="#008585" stroke="#0c0c0c" stroke-width="1.25" stroke-linejoin="miter"/>
<path d="M672.7,351.65 H673.9 L679.5,355.5 L673.9,359.35 H672.7 Z" fill="#008585" stroke="#0c0c0c" stroke-width="1.25" stroke-linejoin="miter"/>
<path d="M672.7,368.65 H673.9 L679.5,372.5 L673.9,376.35 H672.7 Z" fill="#008585" stroke="#0c0c0c" stroke-width="1.25" stroke-linejoin="miter"/>
<path d="M672.7,385.65 H673.9 L679.5,389.5 L673.9,393.35 H672.7 Z" fill="#008585" stroke="#0c0c0c" stroke-width="1.25" stroke-linejoin="miter"/>
<path d="M672.7,402.65 H673.9 L679.5,406.5 L673.9,410.35 H672.7 Z" fill="#008585" stroke="#0c0c0c" stroke-width="1.25" stroke-linejoin="miter"/>
<path d="M672.7,419.65 H673.9 L679.5,423.5 L673.9,427.35 H672.7 Z" fill="#008585" stroke="#0c0c0c" stroke-width="1.25" stroke-linejoin="miter"/>
<path d="M672.7,436.65 H673.9 L679.5,440.5 L673.9,444.35 H672.7 Z" fill="#008585" stroke="#0c0c0c" stroke-width="1.25" stroke-linejoin="miter"/>
<path d="M672.7,456.65 H673.9 L679.5,460.5 L673.9,464.35 H672.7 Z" fill="#c2c2c2" stroke="#0c0c0c" stroke-width="1.25" stroke-linejoin="miter"/><path d="M672.7,453.65 H673.9 L679.5,457.5 L673.9,461.35 H672.7 Z" fill="#fff" stroke="#0c0c0c" stroke-width="1.25" stroke-linejoin="miter"/>
<path d="M672.7,470.65 H673.9 L679.5,474.5 L673.9,478.35 H672.7 Z" fill="#fff" stroke="#0c0c0c" stroke-width="1.25" stroke-linejoin="miter"/>
<path d="M672.7,490.65 H673.9 L679.5,494.5 L673.9,498.35 H672.7 Z" fill="#c2c2c2" stroke="#0c0c0c" stroke-width="1.25" stroke-linejoin="miter"/><path d="M672.7,487.65 H673.9 L679.5,491.5 L673.9,495.35 H672.7 Z" fill="#fff" stroke="#0c0c0c" stroke-width="1.25" stroke-linejoin="miter"/>
<path d="M672.7,507.65 H673.9 L679.5,511.5 L673.9,515.35 H672.7 Z" fill="#c2c2c2" stroke="#0c0c0c" stroke-width="1.25" stroke-linejoin="miter"/><path d="M672.7,504.65 H673.9 L679.5,508.5 L673.9,512.35 H672.7 Z" fill="#fff" stroke="#0c0c0c" stroke-width="1.25" stroke-linejoin="miter"/>
<path d="M672.7,524.65 H673.9 L679.5,528.5 L673.9,532.35 H672.7 Z" fill="#c2c2c2" stroke="#0c0c0c" stroke-width="1.25" stroke-linejoin="miter"/><path d="M672.7,521.65 H673.9 L679.5,525.5 L673.9,529.35 H672.7 Z" fill="#fff" stroke="#0c0c0c" stroke-width="1.25" stroke-linejoin="miter"/>
<path d="M672.7,541.65 H673.9 L679.5,545.5 L673.9,549.35 H672.7 Z" fill="#c2c2c2" stroke="#0c0c0c" stroke-width="1.25" stroke-linejoin="miter"/><path d="M672.7,538.65 H673.9 L679.5,542.5 L673.9,546.35 H672.7 Z" fill="#fff" stroke="#0c0c0c" stroke-width="1.25" stroke-linejoin="miter"/>
<path d="M672.7,558.65 H673.9 L679.5,562.5 L673.9,566.35 H672.7 Z" fill="#c2c2c2" stroke="#0c0c0c" stroke-width="1.25" stroke-linejoin="miter"/><path d="M672.7,555.65 H673.9 L679.5,559.5 L673.9,563.35 H672.7 Z" fill="#fff" stroke="#0c0c0c" stroke-width="1.25" stroke-linejoin="miter"/>
<path d="M672.7,575.65 H673.9 L679.5,579.5 L673.9,583.35 H672.7 Z" fill="#c2c2c2" stroke="#0c0c0c" stroke-width="1.25" stroke-linejoin="miter"/><path d="M672.7,572.65 H673.9 L679.5,576.5 L673.9,580.35 H672.7 Z" fill="#fff" stroke="#0c0c0c" stroke-width="1.25" stroke-linejoin="miter"/>
<path d="M672.7,592.65 H673.9 L679.5,596.5 L673.9,600.35 H672.7 Z" fill="#c2c2c2" stroke="#0c0c0c" stroke-width="1.25" stroke-linejoin="miter"/><path d="M672.7,589.65 H673.9 L679.5,593.5 L673.9,597.35 H672.7 Z" fill="#fff" stroke="#0c0c0c" stroke-width="1.25" stroke-linejoin="miter"/>
<path d="M973.7,45.65 H974.9 L980.5,49.5 L974.9,53.35 H973.7 Z" fill="#fff" stroke="#0c0c0c" stroke-width="1.25" stroke-linejoin="miter"/>
<path d="M786.7,62.65 H787.9 L793.5,66.5 L787.9,70.35 H786.7 Z" fill="#008585" stroke="#0c0c0c" stroke-width="1.25" stroke-linejoin="miter"/>
<path d="M973.7,62.65 H974.9 L980.5,66.5 L974.9,70.35 H973.7 Z" fill="#fff" stroke="#0c0c0c" stroke-width="1.25" stroke-linejoin="miter"/>
<path d="M786.7,79.65 H787.9 L793.5,83.5 L787.9,87.35 H786.7 Z" fill="#008585" stroke="#0c0c0c" stroke-width="1.25" stroke-linejoin="miter"/>
<path d="M973.7,79.65 H974.9 L980.5,83.5 L974.9,87.35 H973.7 Z" fill="#fff" stroke="#0c0c0c" stroke-width="1.25" stroke-linejoin="miter"/>
<path d="M786.7,96.65 H787.9 L793.5,100.5 L787.9,104.35 H786.7 Z" fill="#008585" stroke="#0c0c0c" stroke-width="1.25" stroke-linejoin="miter"/>
<path d="M973.7,96.65 H974.9 L980.5,100.5 L974.9,104.35 H973.7 Z" fill="#fff" stroke="#0c0c0c" stroke-width="1.25" stroke-linejoin="miter"/>
<path d="M786.7,113.65 H787.9 L793.5,117.5 L787.9,121.35 H786.7 Z" fill="#008585" stroke="#0c0c0c" stroke-width="1.25" stroke-linejoin="miter"/>
<path d="M973.7,113.65 H974.9 L980.5,117.5 L974.9,121.35 H973.7 Z" fill="#fff" stroke="#0c0c0c" stroke-width="1.25" stroke-linejoin="miter"/>
<path d="M786.7,130.65 H787.9 L793.5,134.5 L787.9,138.35 H786.7 Z" fill="#008585" stroke="#0c0c0c" stroke-width="1.25" stroke-linejoin="miter"/>
<path d="M973.7,130.65 H974.9 L980.5,134.5 L974.9,138.35 H973.7 Z" fill="#fff" stroke="#0c0c0c" stroke-width="1.25" stroke-linejoin="miter"/>
<path d="M786.7,147.65 H787.9 L793.5,151.5 L787.9,155.35 H786.7 Z" fill="#008585" stroke="#0c0c0c" stroke-width="1.25" stroke-linejoin="miter"/>
<path d="M973.7,147.65 H974.9 L980.5,151.5 L974.9,155.35 H973.7 Z" fill="#fff" stroke="#0c0c0c" stroke-width="1.25" stroke-linejoin="miter"/>
<path d="M786.7,164.65 H787.9 L793.5,168.5 L787.9,172.35 H786.7 Z" fill="#008585" stroke="#0c0c0c" stroke-width="1.25" stroke-linejoin="miter"/>
<path d="M973.7,164.65 H974.9 L980.5,168.5 L974.9,172.35 H973.7 Z" fill="#fff" stroke="#0c0c0c" stroke-width="1.25" stroke-linejoin="miter"/>
<path d="M786.7,181.65 H787.9 L793.5,185.5 L787.9,189.35 H786.7 Z" fill="#008585" stroke="#0c0c0c" stroke-width="1.25" stroke-linejoin="miter"/>
<path d="M973.7,181.65 H974.9 L980.5,185.5 L974.9,189.35 H973.7 Z" fill="#fff" stroke="#0c0c0c" stroke-width="1.25" stroke-linejoin="miter"/>
<path d="M786.7,198.65 H787.9 L793.5,202.5 L787.9,206.35 H786.7 Z" fill="#008585" stroke="#0c0c0c" stroke-width="1.25" stroke-linejoin="miter"/>
<path d="M973.7,198.65 H974.9 L980.5,202.5 L974.9,206.35 H973.7 Z" fill="#fff" stroke="#0c0c0c" stroke-width="1.25" stroke-linejoin="miter"/>
<path d="M786.7,215.65 H787.9 L793.5,219.5 L787.9,223.35 H786.7 Z" fill="#fff" stroke="#0c0c0c" stroke-width="1.25" stroke-linejoin="miter"/>
<path d="M973.7,215.65 H974.9 L980.5,219.5 L974.9,223.35 H973.7 Z" fill="#fff" stroke="#0c0c0c" stroke-width="1.25" stroke-linejoin="miter"/>
<path d="M786.7,232.65 H787.9 L793.5,236.5 L787.9,240.35 H786.7 Z" fill="#008585" stroke="#0c0c0c" stroke-width="1.25" stroke-linejoin="miter"/>
<path d="M973.7,232.65 H974.9 L980.5,236.5 L974.9,240.35 H973.7 Z" fill="#fff" stroke="#0c0c0c" stroke-width="1.25" stroke-linejoin="miter"/>
<path d="M786.7,249.65 H787.9 L793.5,253.5 L787.9,257.35 H786.7 Z" fill="#008585" stroke="#0c0c0c" stroke-width="1.25" stroke-linejoin="miter"/>
<path d="M973.7,249.65 H974.9 L980.5,253.5 L974.9,257.35 H973.7 Z" fill="#fff" stroke="#0c0c0c" stroke-width="1.25" stroke-linejoin="miter"/>
<path d="M786.7,266.65 H787.9 L793.5,270.5 L787.9,274.35 H786.7 Z" fill="#008585" stroke="#0c0c0c" stroke-width="1.25" stroke-linejoin="miter"/>
<path d="M973.7,266.65 H974.9 L980.5,270.5 L974.9,274.35 H973.7 Z" fill="#fff" stroke="#0c0c0c" stroke-width="1.25" stroke-linejoin="miter"/>
<path d="M786.7,283.65 H787.9 L793.5,287.5 L787.9,291.35 H786.7 Z" fill="#008585" stroke="#0c0c0c" stroke-width="1.25" stroke-linejoin="miter"/>
<path d="M973.7,283.65 H974.9 L980.5,287.5 L974.9,291.35 H973.7 Z" fill="#fff" stroke="#0c0c0c" stroke-width="1.25" stroke-linejoin="miter"/>
<path d="M786.7,300.65 H787.9 L793.5,304.5 L787.9,308.35 H786.7 Z" fill="#008585" stroke="#0c0c0c" stroke-width="1.25" stroke-linejoin="miter"/>
<path d="M973.7,300.65 H974.9 L980.5,304.5 L974.9,308.35 H973.7 Z" fill="#fff" stroke="#0c0c0c" stroke-width="1.25" stroke-linejoin="miter"/>
<path d="M786.7,317.65 H787.9 L793.5,321.5 L787.9,325.35 H786.7 Z" fill="#008585" stroke="#0c0c0c" stroke-width="1.25" stroke-linejoin="miter"/>
<path d="M973.7,317.65 H974.9 L980.5,321.5 L974.9,325.35 H973.7 Z" fill="#fff" stroke="#0c0c0c" stroke-width="1.25" stroke-linejoin="miter"/>
<path d="M786.7,334.65 H787.9 L793.5,338.5 L787.9,342.35 H786.7 Z" fill="#008585" stroke="#0c0c0c" stroke-width="1.25" stroke-linejoin="miter"/>
<path d="M973.7,334.65 H974.9 L980.5,338.5 L974.9,342.35 H973.7 Z" fill="#fff" stroke="#0c0c0c" stroke-width="1.25" stroke-linejoin="miter"/>
<path d="M786.7,351.65 H787.9 L793.5,355.5 L787.9,359.35 H786.7 Z" fill="#008585" stroke="#0c0c0c" stroke-width="1.25" stroke-linejoin="miter"/>
<path d="M973.7,351.65 H974.9 L980.5,355.5 L974.9,359.35 H973.7 Z" fill="#fff" stroke="#0c0c0c" stroke-width="1.25" stroke-linejoin="miter"/>
<path d="M786.7,368.65 H787.9 L793.5,372.5 L787.9,376.35 H786.7 Z" fill="#008585" stroke="#0c0c0c" stroke-width="1.25" stroke-linejoin="miter"/>
<path d="M973.7,368.65 H974.9 L980.5,372.5 L974.9,376.35 H973.7 Z" fill="#fff" stroke="#0c0c0c" stroke-width="1.25" stroke-linejoin="miter"/>
<path d="M786.7,385.65 H787.9 L793.5,389.5 L787.9,393.35 H786.7 Z" fill="#008585" stroke="#0c0c0c" stroke-width="1.25" stroke-linejoin="miter"/>
<path d="M973.7,385.65 H974.9 L980.5,389.5 L974.9,393.35 H973.7 Z" fill="#fff" stroke="#0c0c0c" stroke-width="1.25" stroke-linejoin="miter"/>
<path d="M786.7,405.65 H787.9 L793.5,409.5 L787.9,413.35 H786.7 Z" fill="#c2c2c2" stroke="#0c0c0c" stroke-width="1.25" stroke-linejoin="miter"/><path d="M786.7,402.65 H787.9 L793.5,406.5 L787.9,410.35 H786.7 Z" fill="#fff" stroke="#0c0c0c" stroke-width="1.25" stroke-linejoin="miter"/>
<path d="M973.7,405.65 H974.9 L980.5,409.5 L974.9,413.35 H973.7 Z" fill="#c2c2c2" stroke="#0c0c0c" stroke-width="1.25" stroke-linejoin="miter"/><path d="M973.7,402.65 H974.9 L980.5,406.5 L974.9,410.35 H973.7 Z" fill="#fff" stroke="#0c0c0c" stroke-width="1.25" stroke-linejoin="miter"/>
<path d="M786.7,419.65 H787.9 L793.5,423.5 L787.9,427.35 H786.7 Z" fill="#fff" stroke="#0c0c0c" stroke-width="1.25" stroke-linejoin="miter"/>
<path d="M973.7,419.65 H974.9 L980.5,423.5 L974.9,427.35 H973.7 Z" fill="#fff" stroke="#0c0c0c" stroke-width="1.25" stroke-linejoin="miter"/>
<path d="M786.7,439.65 H787.9 L793.5,443.5 L787.9,447.35 H786.7 Z" fill="#c2c2c2" stroke="#0c0c0c" stroke-width="1.25" stroke-linejoin="miter"/><path d="M786.7,436.65 H787.9 L793.5,440.5 L787.9,444.35 H786.7 Z" fill="#fff" stroke="#0c0c0c" stroke-width="1.25" stroke-linejoin="miter"/>
<path d="M973.7,439.65 H974.9 L980.5,443.5 L974.9,447.35 H973.7 Z" fill="#c2c2c2" stroke="#0c0c0c" stroke-width="1.25" stroke-linejoin="miter"/><path d="M973.7,436.65 H974.9 L980.5,440.5 L974.9,444.35 H973.7 Z" fill="#fff" stroke="#0c0c0c" stroke-width="1.25" stroke-linejoin="miter"/>
<path d="M786.7,456.65 H787.9 L793.5,460.5 L787.9,464.35 H786.7 Z" fill="#c2c2c2" stroke="#0c0c0c" stroke-width="1.25" stroke-linejoin="miter"/><path d="M786.7,453.65 H787.9 L793.5,457.5 L787.9,461.35 H786.7 Z" fill="#fff" stroke="#0c0c0c" stroke-width="1.25" stroke-linejoin="miter"/>
<path d="M973.7,456.65 H974.9 L980.5,460.5 L974.9,464.35 H973.7 Z" fill="#c2c2c2" stroke="#0c0c0c" stroke-width="1.25" stroke-linejoin="miter"/><path d="M973.7,453.65 H974.9 L980.5,457.5 L974.9,461.35 H973.7 Z" fill="#fff" stroke="#0c0c0c" stroke-width="1.25" stroke-linejoin="miter"/>
<path d="M786.7,473.65 H787.9 L793.5,477.5 L787.9,481.35 H786.7 Z" fill="#c2c2c2" stroke="#0c0c0c" stroke-width="1.25" stroke-linejoin="miter"/><path d="M786.7,470.65 H787.9 L793.5,474.5 L787.9,478.35 H786.7 Z" fill="#fff" stroke="#0c0c0c" stroke-width="1.25" stroke-linejoin="miter"/>
<path d="M973.7,473.65 H974.9 L980.5,477.5 L974.9,481.35 H973.7 Z" fill="#c2c2c2" stroke="#0c0c0c" stroke-width="1.25" stroke-linejoin="miter"/><path d="M973.7,470.65 H974.9 L980.5,474.5 L974.9,478.35 H973.7 Z" fill="#fff" stroke="#0c0c0c" stroke-width="1.25" stroke-linejoin="miter"/>
<path d="M786.7,490.65 H787.9 L793.5,494.5 L787.9,498.35 H786.7 Z" fill="#c2c2c2" stroke="#0c0c0c" stroke-width="1.25" stroke-linejoin="miter"/><path d="M786.7,487.65 H787.9 L793.5,491.5 L787.9,495.35 H786.7 Z" fill="#fff" stroke="#0c0c0c" stroke-width="1.25" stroke-linejoin="miter"/>
<path d="M973.7,490.65 H974.9 L980.5,494.5 L974.9,498.35 H973.7 Z" fill="#c2c2c2" stroke="#0c0c0c" stroke-width="1.25" stroke-linejoin="miter"/><path d="M973.7,487.65 H974.9 L980.5,491.5 L974.9,495.35 H973.7 Z" fill="#fff" stroke="#0c0c0c" stroke-width="1.25" stroke-linejoin="miter"/>
<path d="M786.7,507.65 H787.9 L793.5,511.5 L787.9,515.35 H786.7 Z" fill="#c2c2c2" stroke="#0c0c0c" stroke-width="1.25" stroke-linejoin="miter"/><path d="M786.7,504.65 H787.9 L793.5,508.5 L787.9,512.35 H786.7 Z" fill="#fff" stroke="#0c0c0c" stroke-width="1.25" stroke-linejoin="miter"/>
<path d="M973.7,507.65 H974.9 L980.5,511.5 L974.9,515.35 H973.7 Z" fill="#c2c2c2" stroke="#0c0c0c" stroke-width="1.25" stroke-linejoin="miter"/><path d="M973.7,504.65 H974.9 L980.5,508.5 L974.9,512.35 H973.7 Z" fill="#fff" stroke="#0c0c0c" stroke-width="1.25" stroke-linejoin="miter"/>
<path d="M786.7,524.65 H787.9 L793.5,528.5 L787.9,532.35 H786.7 Z" fill="#c2c2c2" stroke="#0c0c0c" stroke-width="1.25" stroke-linejoin="miter"/><path d="M786.7,521.65 H787.9 L793.5,525.5 L787.9,529.35 H786.7 Z" fill="#fff" stroke="#0c0c0c" stroke-width="1.25" stroke-linejoin="miter"/>
<path d="M973.7,524.65 H974.9 L980.5,528.5 L974.9,532.35 H973.7 Z" fill="#c2c2c2" stroke="#0c0c0c" stroke-width="1.25" stroke-linejoin="miter"/><path d="M973.7,521.65 H974.9 L980.5,525.5 L974.9,529.35 H973.7 Z" fill="#fff" stroke="#0c0c0c" stroke-width="1.25" stroke-linejoin="miter"/>
<path d="M786.7,541.65 H787.9 L793.5,545.5 L787.9,549.35 H786.7 Z" fill="#c2c2c2" stroke="#0c0c0c" stroke-width="1.25" stroke-linejoin="miter"/><path d="M786.7,538.65 H787.9 L793.5,542.5 L787.9,546.35 H786.7 Z" fill="#fff" stroke="#0c0c0c" stroke-width="1.25" stroke-linejoin="miter"/>
<path d="M973.7,541.65 H974.9 L980.5,545.5 L974.9,549.35 H973.7 Z" fill="#c2c2c2" stroke="#0c0c0c" stroke-width="1.25" stroke-linejoin="miter"/><path d="M973.7,538.65 H974.9 L980.5,542.5 L974.9,546.35 H973.7 Z" fill="#fff" stroke="#0c0c0c" stroke-width="1.25" stroke-linejoin="miter"/>
</g>
</svg></body></html>
